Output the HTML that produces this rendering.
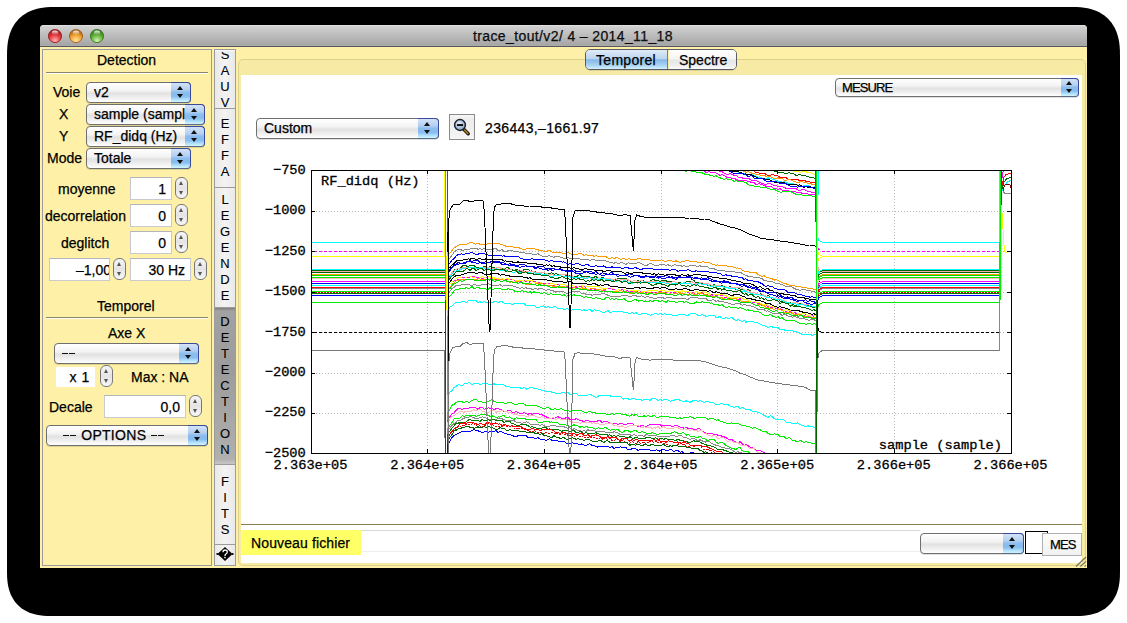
<!DOCTYPE html>
<html><head><meta charset="utf-8">
<style>
*{margin:0;padding:0;box-sizing:border-box}
html,body{width:1127px;height:623px;overflow:hidden;background:#fff;font-family:"Liberation Sans",sans-serif;font-size:13px;color:#000}
.a{position:absolute}
#shadow{left:7px;top:7px;width:1113px;height:609px;background:#000;border-radius:50px}
#win{left:40px;top:25px;width:1047px;height:543px;background:#fef1a7;border-radius:4px 4px 0 0}
#title{left:40px;top:25px;width:1047px;height:22px;border-radius:4px 4px 0 0;background:linear-gradient(#ececec 0px,#d2d2d2 1px,#a6a6a6 20px,#b0b0b0 21px);border-bottom:1px solid #58585e}
.tl{top:4px;width:14px;height:14px;border-radius:50%}
.lbl{white-space:nowrap;line-height:16px;font-size:14px;-webkit-text-stroke:0.25px #000}
.pop .t,.tf .t{-webkit-text-stroke:0.25px #000}.vl{-webkit-text-stroke:0.1px #000}
/* popup */
.pop{border:1px solid #6f6f6f;border-radius:4px;background:linear-gradient(#ffffff 0%,#f3f3f3 40%,#e2e2e2 55%,#f4f4f4 85%,#ffffff 100%);overflow:hidden;box-shadow:0 1px 0 rgba(0,0,0,0.12)}
.pop .t{position:absolute;left:7px;top:1px;white-space:nowrap;font-size:14px;line-height:16px}
.pop{overflow:visible}.pop .b{position:absolute;right:-1px;top:-1px;bottom:-1px;width:20px;background:linear-gradient(#d3e3f6 0%,#b4d0f1 35%,#8dbcee 50%,#86bcef 70%,#b9e6fb 90%,#d2f5fe 100%);border:1px solid #3a4a9a;border-left:none;border-bottom-color:#5a6a8a;border-radius:0 4px 4px 0}
.pop .arr{margin-left:-4px}
.arr{position:absolute;left:50%;width:0;height:0;border-left:3px solid transparent;border-right:3px solid transparent;margin-left:-3px}
.up{border-bottom:4px solid #111}
.dn{border-top:4px solid #111}
.tf{background:#fff;border:1px solid #c8cacf;border-top-color:#b3b5ba}
.tf .t{position:absolute;right:5px;top:3px;white-space:nowrap;font-size:14px;line-height:16px}
.stp{border:1px solid #777;border-radius:6px;background:linear-gradient(#f6f6f6,#e4e4e4 50%,#f8f8f8)}
.stp .arr{border-left-width:2.5px;border-right-width:2.5px;margin-left:-2.5px}
.stp .up{border-bottom:4px solid #555}
.stp .dn{border-top:4px solid #555}
.sep{height:2px;border-top:1px solid #8f8467;border-bottom:1px solid #fff}
.vt{left:214px;width:22px;background:#ededed;border:1px solid #9d9d9d}
.vl{position:absolute;left:0;width:20px;text-align:center;line-height:16px;font-size:13px}
</style></head><body>
<svg class="a" style="left:0;top:0" width="1127" height="623"><path d="M7.00,56.00 L7.08,50.47 L7.34,46.39 L7.75,42.74 L8.34,39.38 L9.09,36.24 L10.01,33.28 L11.09,30.49 L12.33,27.86 L13.73,25.38 L15.28,23.06 L17.00,20.89 L18.86,18.86 L20.89,17.00 L23.06,15.28 L25.38,13.73 L27.86,12.33 L30.49,11.09 L33.28,10.01 L36.24,9.09 L39.38,8.34 L42.74,7.75 L46.39,7.34 L50.47,7.08 L56.00,7.00 L1071.00,7.00 L1076.53,7.08 L1080.61,7.34 L1084.26,7.75 L1087.62,8.34 L1090.76,9.09 L1093.72,10.01 L1096.51,11.09 L1099.14,12.33 L1101.62,13.73 L1103.94,15.28 L1106.11,17.00 L1108.14,18.86 L1110.00,20.89 L1111.72,23.06 L1113.27,25.38 L1114.67,27.86 L1115.91,30.49 L1116.99,33.28 L1117.91,36.24 L1118.66,39.38 L1119.25,42.74 L1119.66,46.39 L1119.92,50.47 L1120.00,56.00 L1120.00,571.00 L1119.92,576.08 L1119.69,579.83 L1119.31,583.17 L1118.77,586.26 L1118.08,589.15 L1117.24,591.87 L1116.25,594.43 L1115.11,596.85 L1113.82,599.12 L1112.39,601.25 L1110.82,603.25 L1109.10,605.10 L1107.25,606.82 L1105.25,608.39 L1103.12,609.82 L1100.85,611.11 L1098.43,612.25 L1095.87,613.24 L1093.15,614.08 L1090.26,614.77 L1087.17,615.31 L1083.83,615.69 L1080.08,615.92 L1075.00,616.00 L52.00,616.00 L46.92,615.92 L43.17,615.69 L39.83,615.31 L36.74,614.77 L33.85,614.08 L31.13,613.24 L28.57,612.25 L26.15,611.11 L23.88,609.82 L21.75,608.39 L19.75,606.82 L17.90,605.10 L16.18,603.25 L14.61,601.25 L13.18,599.12 L11.89,596.85 L10.75,594.43 L9.76,591.87 L8.92,589.15 L8.23,586.26 L7.69,583.17 L7.31,579.83 L7.08,576.08 L7.00,571.00Z" fill="#000"/></svg>
<div id="win" class="a"></div>
<div id="title" class="a"></div>
<svg class="a" style="left:47px;top:28px" width="16" height="16"><defs><radialGradient id="gr" cx="50%" cy="85%" r="75%"><stop offset="0%" stop-color="#ffb4b4"/><stop offset="60%" stop-color="#e4373b"/><stop offset="100%" stop-color="#9a2226"/></radialGradient><linearGradient id="grh" x1="0" y1="0" x2="0" y2="1"><stop offset="0%" stop-color="#fff" stop-opacity="0.95"/><stop offset="100%" stop-color="#fff" stop-opacity="0"/></linearGradient></defs><circle cx="8" cy="8" r="6.6" fill="url(#gr)" stroke="#9a2226" stroke-width="0.9"/><ellipse cx="8" cy="4.6" rx="3.2" ry="2.2" fill="url(#grh)"/></svg>
<svg class="a" style="left:68px;top:28px" width="16" height="16"><defs><radialGradient id="go" cx="50%" cy="85%" r="75%"><stop offset="0%" stop-color="#ffe9a0"/><stop offset="60%" stop-color="#f0a030"/><stop offset="100%" stop-color="#a5621c"/></radialGradient><linearGradient id="goh" x1="0" y1="0" x2="0" y2="1"><stop offset="0%" stop-color="#fff" stop-opacity="0.95"/><stop offset="100%" stop-color="#fff" stop-opacity="0"/></linearGradient></defs><circle cx="8" cy="8" r="6.6" fill="url(#go)" stroke="#a5621c" stroke-width="0.9"/><ellipse cx="8" cy="4.6" rx="3.2" ry="2.2" fill="url(#goh)"/></svg>
<svg class="a" style="left:89px;top:28px" width="16" height="16"><defs><radialGradient id="gg" cx="50%" cy="85%" r="75%"><stop offset="0%" stop-color="#d8f4b0"/><stop offset="60%" stop-color="#5fb03a"/><stop offset="100%" stop-color="#3a7a22"/></radialGradient><linearGradient id="ggh" x1="0" y1="0" x2="0" y2="1"><stop offset="0%" stop-color="#fff" stop-opacity="0.95"/><stop offset="100%" stop-color="#fff" stop-opacity="0"/></linearGradient></defs><circle cx="8" cy="8" r="6.6" fill="url(#gg)" stroke="#3a7a22" stroke-width="0.9"/><ellipse cx="8" cy="4.6" rx="3.2" ry="2.2" fill="url(#ggh)"/></svg>
<div class="a lbl" style="left:473px;top:28px;color:#111;letter-spacing:0.38px">trace_tout/v2/ 4 – 2014_11_18</div>

<div class="a" style="left:238px;top:59px;width:848px;height:507px;border:1px solid #ddd08f;border-radius:5px;background:#f7eaa4"></div>
<div class="a" style="left:241px;top:75px;width:841px;height:488px;background:#fff"></div>
<div class="a" style="left:585px;top:49px;width:152px;height:21px;border:1px solid #5a5a66;border-radius:5px;overflow:hidden;box-shadow:0 1px 0 rgba(0,0,0,.1)">
<div class="a" style="left:0;top:0;width:82px;height:19px;background:linear-gradient(#e0ebf8 0%,#bcd5f0 45%,#86b7e8 52%,#a9d3f3 80%,#d2f1fd 100%);border-right:1px solid #6d7d9a"></div>
<div class="a" style="left:83px;top:0;width:69px;height:19px;background:linear-gradient(#ffffff 0%,#f4f4f4 45%,#e6e6e6 55%,#f0f0f0 85%,#fafafa 100%)"></div>
<div class="a lbl" style="left:10px;top:2px;letter-spacing:0.3px">Temporel</div>
<div class="a lbl" style="left:93px;top:2px">Spectre</div>
</div>
<div class="a pop" style="left:835px;top:78px;width:244px;height:19px"><div class="t" style="top:1px;font-size:13px;left:6px;letter-spacing:-0.9px">MESURE</div><div class="b" style="width:18px"><div class="arr up" style="top:2px"></div><div class="arr dn" style="top:10px"></div></div></div>
<div class="a pop" style="left:256px;top:118px;width:183px;height:21px"><div class="t" style="">Custom</div><div class="b" style="width:21px"><div class="arr up" style="top:3px"></div><div class="arr dn" style="top:11px"></div></div></div>
<div class="a" style="left:449px;top:114px;width:26px;height:26px;border:1px solid #8a8a8a;background:linear-gradient(#f7f7f7,#ececec 20%,#f2f2f2 80%,#f7f7f7)">
<svg class="a" style="left:0;top:0" width="24" height="24" viewBox="0 0 24 24"><defs><radialGradient id="lz" cx="40%" cy="35%" r="70%"><stop offset="0%" stop-color="#e4eef8"/><stop offset="100%" stop-color="#7f9fc4"/></radialGradient></defs><line x1="13" y1="13.5" x2="18.2" y2="18.7" stroke="#111" stroke-width="3.4" stroke-linecap="round"/><line x1="14.6" y1="15.1" x2="17.8" y2="18.3" stroke="#a67c1e" stroke-width="1.7" stroke-linecap="round"/><circle cx="10" cy="10" r="5.4" fill="url(#lz)" stroke="#1b2430" stroke-width="1.5"/><rect x="7" y="9.1" width="6" height="1.9" fill="#0a0a0a"/></svg></div>
<div class="a lbl" style="left:485px;top:120px;letter-spacing:0.35px">236443,–1661.97</div>
<div class="a" style="left:241px;top:524px;width:841px;height:1px;background:#8a7e55"></div>
<div class="a" style="left:241px;top:530px;width:120px;height:25px;background:#ffff66"></div>
<div class="a lbl" style="left:251px;top:535px;letter-spacing:0.12px">Nouveau fichier</div>
<div class="a" style="left:361px;top:530px;width:559px;height:22px;border-top:1px solid #d8d8d8;border-bottom:1px solid #eeeeee"></div>
<div class="a pop" style="left:920px;top:533px;width:104px;height:21px"><div class="t" style=""></div><div class="b" style="width:21px"><div class="arr up" style="top:3px"></div><div class="arr dn" style="top:11px"></div></div></div>
<div class="a" style="left:1025px;top:531px;width:23px;height:23px;border:1px solid #000;background:#fff"></div>
<div class="a" style="left:1042px;top:533px;width:40px;height:23px;border:1px solid #b0b0b0;background:linear-gradient(#fdfdfd,#f1f1f1)"><div class="a lbl" style="left:7px;top:3px;font-size:13px;letter-spacing:-0.9px">MES</div></div>
<!--CHART--><svg class="a" style="left:0;top:0" width="1127" height="623" viewBox="0 0 1127 623">
<defs><clipPath id="pc"><rect x="312" y="171" width="699" height="282"/></clipPath></defs>
<g fill="none" stroke-width="1" shape-rendering="crispEdges"><line x1="316" y1="211.5" x2="1006" y2="211.5" stroke="#bbbbbb" stroke-dasharray="1,2"/><line x1="316" y1="251.5" x2="1006" y2="251.5" stroke="#bbbbbb" stroke-dasharray="1,2"/><line x1="316" y1="292.5" x2="1006" y2="292.5" stroke="#bbbbbb" stroke-dasharray="1,2"/><line x1="316" y1="332.5" x2="1006" y2="332.5" stroke="#bbbbbb" stroke-dasharray="1,2"/><line x1="316" y1="373.5" x2="1006" y2="373.5" stroke="#bbbbbb" stroke-dasharray="1,2"/><line x1="316" y1="413.5" x2="1006" y2="413.5" stroke="#bbbbbb" stroke-dasharray="1,2"/><line x1="427.5" y1="175" x2="427.5" y2="448" stroke="#bbbbbb" stroke-dasharray="1,2"/><line x1="544.5" y1="175" x2="544.5" y2="448" stroke="#bbbbbb" stroke-dasharray="1,2"/><line x1="661.5" y1="175" x2="661.5" y2="448" stroke="#bbbbbb" stroke-dasharray="1,2"/><line x1="777.5" y1="175" x2="777.5" y2="448" stroke="#bbbbbb" stroke-dasharray="1,2"/><line x1="894.5" y1="175" x2="894.5" y2="448" stroke="#bbbbbb" stroke-dasharray="1,2"/></g>
<g clip-path="url(#pc)" fill="none" stroke-width="1" stroke-linejoin="round" shape-rendering="crispEdges">
<polyline points="309.0,256.5 445.5,256.5 445.5,120.0 447.5,120.0 447.5,150.4 448.0,144.4 450.0,145.4 452.0,145.5 454.0,144.8 456.0,144.9 458.0,144.9 460.0,145.2 462.0,145.5 464.0,144.5 466.0,144.1 468.0,145.2 470.0,145.0 472.0,145.4 474.0,144.3 476.0,144.7 478.0,145.2 480.0,144.7 482.0,145.6 484.0,145.8 486.0,144.5 488.0,144.1 490.0,144.7 492.0,145.6 494.0,145.0 496.0,144.6 498.0,144.7 500.0,144.1 502.0,144.3 504.0,144.6 506.0,144.9 508.0,144.5 510.0,144.4 512.0,144.3 514.0,144.7 516.0,144.6 518.0,144.1 520.0,145.2 522.0,145.2 524.0,145.3 526.0,144.6 528.0,145.6 530.0,145.8 532.0,144.7 534.0,144.6 536.0,145.2 538.0,145.4 540.0,145.8 542.0,145.2 544.0,145.6 546.0,145.5 548.0,144.9 550.0,145.1 552.0,145.6 554.0,145.8 556.0,145.3 558.0,145.2 560.0,144.3 562.0,144.4 564.0,145.3 566.0,145.0 568.0,144.5 570.0,144.9 572.0,145.3 574.0,145.4 576.0,144.9 578.0,144.9 580.0,145.0 582.0,145.4 584.0,145.2 586.0,144.9 588.0,144.9 590.0,144.2 592.0,144.0 594.0,145.0 596.0,145.8 598.0,145.4 600.0,145.0 602.0,144.5 604.0,144.8 606.0,145.7 608.0,145.7 610.0,145.3 612.0,145.7 614.0,144.8 616.0,145.0 618.0,145.7 620.0,145.4 622.0,145.1 624.0,144.7 626.0,145.0 628.0,145.7 630.0,144.5 632.0,145.3 634.0,145.6 636.0,145.8 638.0,145.7 640.0,145.7 642.0,145.3 644.0,145.2 646.0,145.0 648.0,144.3 650.0,145.3 652.0,145.2 654.0,144.6 656.0,144.9 658.0,144.9 660.0,144.7 662.0,144.9 664.0,145.3 666.0,145.8 668.0,146.0 670.0,146.0 672.0,145.5 674.0,145.7 676.0,145.8 678.0,146.7 680.0,147.5 682.0,147.9 684.0,148.1 686.0,148.4 688.0,147.7 690.0,148.5 692.0,148.7 694.0,147.9 696.0,147.6 698.0,147.7 700.0,149.0 702.0,149.1 704.0,149.2 706.0,150.4 708.0,150.7 710.0,150.7 712.0,151.2 714.0,152.3 716.0,152.4 718.0,152.9 720.0,154.1 722.0,154.5 724.0,154.7 726.0,155.4 728.0,155.2 730.0,156.0 732.0,156.7 734.0,156.9 736.0,157.2 738.0,158.8 740.0,159.1 742.0,159.1 744.0,160.0 746.0,161.0 748.0,160.4 750.0,160.5 752.0,161.1 754.0,162.5 756.0,162.5 758.0,163.6 760.0,164.3 762.0,164.6 764.0,164.4 766.0,165.8 768.0,166.3 770.0,166.3 772.0,166.1 774.0,166.9 776.0,167.1 778.0,167.7 780.0,167.7 782.0,168.5 784.0,168.1 786.0,168.6 788.0,170.2 790.0,170.8 792.0,170.3 794.0,171.2 796.0,170.8 798.0,171.9 800.0,172.2 802.0,171.9 804.0,171.8 806.0,171.5 808.0,173.1 810.0,172.4 812.0,173.7 814.0,174.5 815.0,173.8 816.5,173.8 816.5,520.0 817.5,261.5 819.0,258.5 821.0,257.2 824.0,256.5 999.5,256.5 999.5,120.0" stroke="#ffff00" stroke-width="1.0"/>
<polyline points="309.0,270.5 445.5,270.5 445.5,120.0 447.5,120.0 447.5,156.2 448.0,150.2 450.0,150.5 452.0,148.8 454.0,148.3 456.0,149.6 458.0,149.9 460.0,149.8 462.0,149.1 464.0,149.4 466.0,149.6 468.0,149.6 470.0,148.7 472.0,149.0 474.0,149.0 476.0,149.6 478.0,150.4 480.0,150.6 482.0,149.8 484.0,149.4 486.0,148.9 488.0,148.2 490.0,148.0 492.0,148.8 494.0,148.8 496.0,148.9 498.0,149.9 500.0,149.6 502.0,149.5 504.0,148.8 506.0,148.2 508.0,148.6 510.0,148.3 512.0,149.0 514.0,150.2 516.0,150.0 518.0,148.9 520.0,149.9 522.0,150.1 524.0,150.1 526.0,150.4 528.0,150.2 530.0,150.2 532.0,149.3 534.0,150.3 536.0,150.6 538.0,149.1 540.0,149.7 542.0,149.9 544.0,149.4 546.0,149.4 548.0,149.3 550.0,150.2 552.0,149.6 554.0,150.1 556.0,149.3 558.0,150.1 560.0,150.4 562.0,149.6 564.0,149.5 566.0,150.2 568.0,150.1 570.0,149.5 572.0,148.8 574.0,148.8 576.0,149.5 578.0,148.7 580.0,149.9 582.0,149.0 584.0,150.0 586.0,149.2 588.0,150.2 590.0,150.0 592.0,149.6 594.0,149.4 596.0,149.6 598.0,149.6 600.0,149.0 602.0,148.6 604.0,149.1 606.0,150.1 608.0,149.8 610.0,148.6 612.0,149.7 614.0,149.9 616.0,150.3 618.0,149.0 620.0,149.7 622.0,148.6 624.0,149.3 626.0,148.9 628.0,148.6 630.0,149.8 632.0,148.7 634.0,149.1 636.0,149.9 638.0,149.0 640.0,148.6 642.0,149.8 644.0,149.3 646.0,149.7 648.0,148.5 650.0,148.8 652.0,148.5 654.0,149.3 656.0,148.5 658.0,149.9 660.0,148.6 662.0,149.7 664.0,148.8 666.0,149.1 668.0,150.4 670.0,149.7 672.0,149.7 674.0,150.8 676.0,150.7 678.0,150.1 680.0,151.9 682.0,151.0 684.0,150.6 686.0,151.2 688.0,152.1 690.0,152.8 692.0,151.9 694.0,152.2 696.0,151.8 698.0,152.6 700.0,153.7 702.0,154.4 704.0,155.3 706.0,155.7 708.0,156.3 710.0,156.6 712.0,156.5 714.0,156.3 716.0,157.5 718.0,157.5 720.0,157.4 722.0,158.4 724.0,159.9 726.0,159.3 728.0,160.3 730.0,160.6 732.0,161.3 734.0,161.1 736.0,163.0 738.0,162.6 740.0,163.4 742.0,163.7 744.0,163.3 746.0,164.6 748.0,164.5 750.0,164.6 752.0,165.0 754.0,165.7 756.0,166.1 758.0,167.6 760.0,168.3 762.0,169.7 764.0,170.3 766.0,170.9 768.0,169.9 770.0,170.2 772.0,170.2 774.0,171.1 776.0,171.7 778.0,172.6 780.0,173.0 782.0,172.4 784.0,172.9 786.0,173.5 788.0,172.9 790.0,173.0 792.0,174.0 794.0,173.9 796.0,175.3 798.0,175.0 800.0,174.9 802.0,175.2 804.0,175.6 806.0,175.9 808.0,176.8 810.0,177.2 812.0,177.2 814.0,178.1 815.0,178.1 816.5,178.1 816.5,520.0 817.5,275.5 819.0,272.5 821.0,271.2 824.0,270.5 999.5,270.5 999.5,120.0" stroke="#006600" stroke-width="1.0"/>
<polyline points="309.0,287.5 445.5,287.5 445.5,120.0 447.5,120.0 447.5,159.5 448.0,153.5 450.0,153.9 452.0,153.7 454.0,154.1 456.0,154.3 458.0,153.2 460.0,152.8 462.0,154.2 464.0,153.6 466.0,153.3 468.0,154.8 470.0,154.2 472.0,154.7 474.0,154.2 476.0,154.4 478.0,153.4 480.0,154.1 482.0,154.8 484.0,154.3 486.0,154.6 488.0,154.5 490.0,153.3 492.0,154.3 494.0,154.3 496.0,153.7 498.0,153.0 500.0,154.4 502.0,154.1 504.0,154.5 506.0,154.9 508.0,154.8 510.0,155.1 512.0,154.2 514.0,154.7 516.0,154.1 518.0,154.9 520.0,155.1 522.0,153.6 524.0,153.1 526.0,153.1 528.0,154.6 530.0,154.1 532.0,154.3 534.0,153.7 536.0,153.9 538.0,153.7 540.0,153.6 542.0,154.0 544.0,154.2 546.0,154.9 548.0,154.7 550.0,155.1 552.0,155.1 554.0,155.4 556.0,154.8 558.0,153.6 560.0,154.6 562.0,155.1 564.0,155.2 566.0,154.6 568.0,154.6 570.0,153.6 572.0,154.5 574.0,154.3 576.0,153.7 578.0,153.0 580.0,154.4 582.0,155.1 584.0,153.6 586.0,154.4 588.0,154.0 590.0,153.3 592.0,153.3 594.0,154.3 596.0,154.9 598.0,153.4 600.0,154.0 602.0,153.1 604.0,154.1 606.0,153.7 608.0,154.7 610.0,155.2 612.0,154.4 614.0,155.1 616.0,154.0 618.0,153.2 620.0,153.9 622.0,153.0 624.0,153.1 626.0,153.5 628.0,154.0 630.0,153.3 632.0,152.8 634.0,154.3 636.0,153.7 638.0,154.8 640.0,155.1 642.0,154.1 644.0,154.0 646.0,154.0 648.0,154.3 650.0,154.3 652.0,154.2 654.0,154.3 656.0,155.0 658.0,154.4 660.0,154.0 662.0,154.6 664.0,154.0 666.0,154.1 668.0,155.6 670.0,155.3 672.0,155.4 674.0,154.5 676.0,155.1 678.0,155.8 680.0,155.0 682.0,156.1 684.0,156.6 686.0,155.8 688.0,156.8 690.0,156.9 692.0,157.5 694.0,157.2 696.0,158.0 698.0,158.4 700.0,157.3 702.0,157.4 704.0,159.0 706.0,160.4 708.0,159.8 710.0,160.3 712.0,161.1 714.0,161.2 716.0,161.6 718.0,162.0 720.0,162.6 722.0,163.5 724.0,163.6 726.0,164.1 728.0,165.4 730.0,164.7 732.0,165.9 734.0,166.9 736.0,166.8 738.0,166.9 740.0,168.4 742.0,168.1 744.0,168.2 746.0,169.1 748.0,170.3 750.0,169.8 752.0,170.4 754.0,171.0 756.0,172.5 758.0,172.5 760.0,173.7 762.0,173.0 764.0,173.3 766.0,174.3 768.0,175.4 770.0,175.2 772.0,174.9 774.0,174.9 776.0,175.9 778.0,175.9 780.0,177.4 782.0,178.2 784.0,177.4 786.0,177.6 788.0,179.0 790.0,179.4 792.0,180.1 794.0,179.6 796.0,179.2 798.0,179.6 800.0,180.9 802.0,180.5 804.0,180.7 806.0,181.1 808.0,181.5 810.0,181.8 812.0,183.1 814.0,182.3 815.0,182.8 816.5,182.8 816.5,520.0 817.5,292.5 819.0,289.5 821.0,288.2 824.0,287.5 999.5,287.5 999.5,120.0" stroke="#ff0000" stroke-width="1.0"/>
<polyline points="309.0,274.5 445.5,274.5 445.5,120.0 447.5,120.0 447.5,161.0 448.0,155.0 450.0,154.5 452.0,154.9 454.0,154.6 456.0,154.3 458.0,154.9 460.0,156.1 462.0,156.3 464.0,156.3 466.0,155.2 468.0,155.5 470.0,155.0 472.0,154.7 474.0,154.4 476.0,154.6 478.0,156.0 480.0,156.3 482.0,156.4 484.0,156.4 486.0,155.2 488.0,155.0 490.0,155.6 492.0,156.0 494.0,156.4 496.0,156.6 498.0,155.0 500.0,155.6 502.0,155.9 504.0,155.6 506.0,154.9 508.0,155.2 510.0,154.6 512.0,156.0 514.0,156.4 516.0,155.9 518.0,155.2 520.0,156.2 522.0,155.9 524.0,156.4 526.0,156.5 528.0,155.9 530.0,155.5 532.0,155.7 534.0,155.4 536.0,154.8 538.0,154.9 540.0,155.9 542.0,154.7 544.0,154.3 546.0,155.3 548.0,155.0 550.0,155.4 552.0,155.4 554.0,155.2 556.0,156.4 558.0,155.2 560.0,155.2 562.0,154.8 564.0,155.5 566.0,155.1 568.0,155.1 570.0,155.8 572.0,155.3 574.0,155.5 576.0,156.3 578.0,155.0 580.0,154.4 582.0,154.6 584.0,155.7 586.0,155.8 588.0,155.1 590.0,155.0 592.0,154.7 594.0,155.1 596.0,154.5 598.0,155.5 600.0,156.3 602.0,156.7 604.0,156.4 606.0,156.7 608.0,155.0 610.0,154.9 612.0,156.2 614.0,156.3 616.0,155.6 618.0,156.4 620.0,156.1 622.0,156.3 624.0,155.4 626.0,154.8 628.0,155.2 630.0,154.7 632.0,155.0 634.0,156.2 636.0,155.4 638.0,154.5 640.0,154.2 642.0,154.4 644.0,155.7 646.0,155.3 648.0,155.0 650.0,154.5 652.0,156.1 654.0,155.6 656.0,154.9 658.0,154.4 660.0,154.2 662.0,154.6 664.0,155.9 666.0,155.4 668.0,155.1 670.0,156.1 672.0,156.0 674.0,157.7 676.0,156.6 678.0,157.2 680.0,158.0 682.0,157.7 684.0,158.9 686.0,158.4 688.0,157.9 690.0,158.2 692.0,157.7 694.0,158.4 696.0,158.4 698.0,159.8 700.0,160.4 702.0,160.3 704.0,159.7 706.0,160.2 708.0,160.7 710.0,161.1 712.0,161.7 714.0,163.4 716.0,162.9 718.0,162.9 720.0,165.0 722.0,165.3 724.0,166.6 726.0,166.2 728.0,167.4 730.0,167.6 732.0,168.3 734.0,168.8 736.0,168.8 738.0,168.3 740.0,168.7 742.0,170.5 744.0,171.5 746.0,172.2 748.0,171.6 750.0,172.3 752.0,173.2 754.0,173.5 756.0,174.3 758.0,174.3 760.0,174.9 762.0,175.4 764.0,175.0 766.0,176.4 768.0,177.3 770.0,176.1 772.0,177.7 774.0,178.5 776.0,178.5 778.0,177.5 780.0,179.1 782.0,178.4 784.0,180.0 786.0,180.3 788.0,179.4 790.0,179.6 792.0,180.8 794.0,181.2 796.0,182.0 798.0,182.8 800.0,181.8 802.0,181.3 804.0,183.1 806.0,182.2 808.0,183.7 810.0,183.0 812.0,184.3 814.0,184.9 815.0,184.3 816.5,184.3 816.5,520.0 817.5,279.5 819.0,276.5 821.0,275.2 824.0,274.5 999.5,274.5 999.5,120.0" stroke="#ff9900" stroke-width="1.0"/>
<polyline points="309.0,285.5 445.5,285.5 445.5,120.0 447.5,120.0 447.5,164.2 448.0,158.2 450.0,158.6 452.0,158.8 454.0,159.2 456.0,158.9 458.0,159.2 460.0,157.5 462.0,157.7 464.0,158.8 466.0,158.6 468.0,159.0 470.0,157.6 472.0,157.8 474.0,157.4 476.0,157.9 478.0,158.1 480.0,157.1 482.0,157.1 484.0,157.2 486.0,158.6 488.0,158.7 490.0,157.6 492.0,158.4 494.0,157.4 496.0,158.0 498.0,157.3 500.0,156.7 502.0,158.3 504.0,157.5 506.0,157.3 508.0,158.7 510.0,159.0 512.0,157.9 514.0,158.9 516.0,158.4 518.0,158.5 520.0,157.6 522.0,158.7 524.0,158.6 526.0,159.2 528.0,159.2 530.0,158.0 532.0,157.7 534.0,157.2 536.0,157.0 538.0,156.8 540.0,157.2 542.0,157.9 544.0,157.0 546.0,158.0 548.0,157.7 550.0,157.5 552.0,158.5 554.0,158.1 556.0,157.7 558.0,157.8 560.0,158.4 562.0,157.2 564.0,158.7 566.0,157.3 568.0,158.2 570.0,158.8 572.0,157.3 574.0,158.3 576.0,157.8 578.0,158.1 580.0,157.1 582.0,156.8 584.0,156.9 586.0,158.5 588.0,157.6 590.0,158.4 592.0,159.0 594.0,159.2 596.0,158.1 598.0,157.8 600.0,158.0 602.0,158.5 604.0,157.4 606.0,158.3 608.0,158.7 610.0,159.0 612.0,157.4 614.0,158.7 616.0,157.4 618.0,157.5 620.0,158.0 622.0,158.8 624.0,158.0 626.0,158.8 628.0,158.4 630.0,157.8 632.0,157.5 634.0,157.2 636.0,156.9 638.0,156.9 640.0,158.0 642.0,159.0 644.0,157.7 646.0,157.0 648.0,158.6 650.0,158.3 652.0,157.9 654.0,157.4 656.0,158.0 658.0,158.7 660.0,158.1 662.0,158.1 664.0,157.5 666.0,159.1 668.0,158.0 670.0,158.7 672.0,159.8 674.0,158.9 676.0,159.9 678.0,160.8 680.0,160.6 682.0,161.0 684.0,159.9 686.0,160.3 688.0,160.0 690.0,161.4 692.0,160.9 694.0,161.2 696.0,162.5 698.0,162.8 700.0,163.3 702.0,162.9 704.0,163.1 706.0,164.0 708.0,164.1 710.0,164.1 712.0,164.7 714.0,164.7 716.0,165.5 718.0,167.3 720.0,168.2 722.0,168.2 724.0,168.2 726.0,168.3 728.0,168.1 730.0,168.7 732.0,170.3 734.0,171.3 736.0,171.0 738.0,172.1 740.0,172.8 742.0,173.2 744.0,173.6 746.0,174.2 748.0,174.0 750.0,174.9 752.0,174.7 754.0,175.4 756.0,176.5 758.0,177.1 760.0,176.8 762.0,178.2 764.0,178.4 766.0,178.6 768.0,177.8 770.0,178.8 772.0,178.8 774.0,179.9 776.0,180.2 778.0,181.2 780.0,181.5 782.0,182.2 784.0,181.8 786.0,182.5 788.0,183.2 790.0,183.9 792.0,183.3 794.0,184.3 796.0,184.9 798.0,185.0 800.0,185.7 802.0,186.2 804.0,185.7 806.0,185.7 808.0,185.2 810.0,186.5 812.0,187.4 814.0,187.0 815.0,186.8 816.5,186.8 816.5,520.0 817.5,290.5 819.0,287.5 821.0,286.2 824.0,285.5 999.5,285.5 999.5,120.0" stroke="#00ffff" stroke-width="1.0"/>
<polyline points="309.0,293.5 445.5,293.5 445.5,120.0 447.5,120.0 447.5,165.6 448.0,159.6 450.0,159.8 452.0,159.3 454.0,158.6 456.0,157.9 458.0,158.9 460.0,158.9 462.0,159.5 464.0,158.9 466.0,159.5 468.0,158.7 470.0,159.5 472.0,159.6 474.0,159.1 476.0,159.1 478.0,159.4 480.0,158.5 482.0,158.9 484.0,159.6 486.0,158.7 488.0,159.5 490.0,159.6 492.0,159.9 494.0,159.0 496.0,158.2 498.0,159.3 500.0,159.7 502.0,159.1 504.0,158.2 506.0,158.1 508.0,159.0 510.0,158.6 512.0,159.8 514.0,159.4 516.0,158.6 518.0,159.2 520.0,158.8 522.0,159.8 524.0,160.1 526.0,159.4 528.0,159.4 530.0,159.5 532.0,159.8 534.0,160.2 536.0,158.5 538.0,158.5 540.0,159.0 542.0,158.6 544.0,159.0 546.0,158.2 548.0,159.5 550.0,159.2 552.0,158.3 554.0,159.1 556.0,158.7 558.0,158.3 560.0,158.7 562.0,158.2 564.0,158.1 566.0,159.4 568.0,159.5 570.0,158.2 572.0,159.3 574.0,158.1 576.0,158.4 578.0,159.6 580.0,159.4 582.0,158.8 584.0,158.7 586.0,158.7 588.0,158.1 590.0,159.7 592.0,158.4 594.0,158.6 596.0,159.4 598.0,158.9 600.0,159.9 602.0,158.8 604.0,159.9 606.0,160.1 608.0,159.7 610.0,160.0 612.0,159.3 614.0,159.8 616.0,159.9 618.0,159.3 620.0,159.1 622.0,159.4 624.0,159.0 626.0,158.2 628.0,159.2 630.0,158.6 632.0,158.8 634.0,159.5 636.0,158.5 638.0,157.9 640.0,157.9 642.0,158.8 644.0,158.6 646.0,158.4 648.0,158.7 650.0,159.7 652.0,158.8 654.0,158.7 656.0,159.7 658.0,159.5 660.0,158.7 662.0,159.0 664.0,159.3 666.0,158.9 668.0,159.3 670.0,159.4 672.0,160.6 674.0,160.2 676.0,160.8 678.0,161.8 680.0,162.2 682.0,161.4 684.0,161.7 686.0,161.3 688.0,161.5 690.0,161.9 692.0,162.7 694.0,163.5 696.0,162.6 698.0,161.8 700.0,162.5 702.0,162.5 704.0,162.7 706.0,164.6 708.0,164.3 710.0,165.7 712.0,165.8 714.0,167.3 716.0,168.0 718.0,167.0 720.0,167.2 722.0,169.1 724.0,169.4 726.0,169.5 728.0,170.6 730.0,171.3 732.0,171.3 734.0,171.5 736.0,171.2 738.0,171.9 740.0,172.1 742.0,173.4 744.0,174.2 746.0,173.9 748.0,175.0 750.0,174.7 752.0,174.9 754.0,176.4 756.0,176.9 758.0,178.3 760.0,178.5 762.0,179.0 764.0,178.3 766.0,179.7 768.0,178.9 770.0,180.0 772.0,181.2 774.0,181.9 776.0,182.4 778.0,181.9 780.0,182.5 782.0,183.2 784.0,182.3 786.0,183.9 788.0,184.7 790.0,184.3 792.0,185.0 794.0,184.7 796.0,184.5 798.0,185.5 800.0,184.8 802.0,186.2 804.0,187.2 806.0,186.4 808.0,187.6 810.0,186.5 812.0,187.9 814.0,187.4 815.0,187.8 816.5,187.8 816.5,520.0 817.5,298.5 819.0,295.5 821.0,294.2 824.0,293.5 999.5,293.5 999.5,120.0" stroke="#000000" stroke-width="1.0"/>
<polyline points="309.0,283.5 445.5,283.5 445.5,120.0 447.5,120.0 447.5,165.6 448.0,159.6 450.0,159.2 452.0,160.0 454.0,159.1 456.0,159.8 458.0,159.7 460.0,159.0 462.0,159.7 464.0,159.0 466.0,159.5 468.0,159.0 470.0,158.8 472.0,159.4 474.0,160.5 476.0,159.4 478.0,159.2 480.0,160.0 482.0,160.9 484.0,160.5 486.0,160.0 488.0,160.9 490.0,159.4 492.0,160.5 494.0,159.8 496.0,159.2 498.0,159.0 500.0,159.3 502.0,160.4 504.0,159.5 506.0,160.0 508.0,160.3 510.0,159.8 512.0,160.0 514.0,159.1 516.0,158.8 518.0,159.0 520.0,160.0 522.0,159.9 524.0,159.6 526.0,160.0 528.0,159.9 530.0,159.6 532.0,160.4 534.0,160.6 536.0,159.7 538.0,160.0 540.0,160.1 542.0,160.8 544.0,160.7 546.0,159.8 548.0,160.9 550.0,159.6 552.0,159.7 554.0,160.4 556.0,159.4 558.0,159.8 560.0,159.0 562.0,160.0 564.0,160.5 566.0,160.3 568.0,160.9 570.0,159.9 572.0,160.4 574.0,160.3 576.0,160.3 578.0,160.0 580.0,160.7 582.0,161.1 584.0,160.3 586.0,160.4 588.0,159.3 590.0,160.2 592.0,160.3 594.0,161.1 596.0,161.0 598.0,159.9 600.0,159.7 602.0,160.2 604.0,159.1 606.0,159.6 608.0,159.2 610.0,159.0 612.0,158.8 614.0,160.1 616.0,159.3 618.0,159.2 620.0,159.5 622.0,160.6 624.0,159.4 626.0,159.7 628.0,160.0 630.0,160.8 632.0,160.9 634.0,161.0 636.0,159.9 638.0,159.8 640.0,159.6 642.0,160.6 644.0,161.1 646.0,159.7 648.0,159.2 650.0,159.2 652.0,159.2 654.0,159.7 656.0,160.1 658.0,159.5 660.0,158.9 662.0,159.6 664.0,159.9 666.0,160.6 668.0,161.7 670.0,161.7 672.0,161.5 674.0,161.7 676.0,162.1 678.0,161.1 680.0,162.5 682.0,163.0 684.0,163.4 686.0,163.5 688.0,162.9 690.0,162.8 692.0,162.4 694.0,163.4 696.0,162.7 698.0,162.6 700.0,163.0 702.0,163.5 704.0,164.3 706.0,164.4 708.0,164.6 710.0,165.3 712.0,165.8 714.0,166.8 716.0,166.8 718.0,168.8 720.0,169.3 722.0,168.9 724.0,169.3 726.0,170.0 728.0,170.5 730.0,170.6 732.0,172.4 734.0,173.6 736.0,173.3 738.0,173.6 740.0,173.2 742.0,173.4 744.0,174.3 746.0,174.8 748.0,176.4 750.0,176.0 752.0,175.9 754.0,178.0 756.0,178.2 758.0,177.9 760.0,178.9 762.0,178.4 764.0,179.5 766.0,181.1 768.0,181.6 770.0,181.8 772.0,181.2 774.0,181.5 776.0,181.4 778.0,182.9 780.0,183.2 782.0,184.0 784.0,183.7 786.0,183.6 788.0,185.0 790.0,186.1 792.0,186.4 794.0,186.6 796.0,186.9 798.0,187.1 800.0,186.3 802.0,186.8 804.0,186.8 806.0,186.4 808.0,186.5 810.0,187.2 812.0,187.6 814.0,188.8 815.0,188.8 816.5,188.8 816.5,520.0 817.5,288.5 819.0,285.5 821.0,284.2 824.0,283.5 999.5,283.5 999.5,120.0" stroke="#0000ff" stroke-width="1.0"/>
<polyline points="309.0,281.5 445.5,281.5 445.5,120.0 447.5,120.0 447.5,168.5 448.0,162.5 450.0,163.7 452.0,162.5 454.0,163.2 456.0,162.3 458.0,162.2 460.0,163.7 462.0,162.7 464.0,163.2 466.0,163.0 468.0,162.9 470.0,163.0 472.0,162.4 474.0,163.4 476.0,162.3 478.0,162.2 480.0,161.8 482.0,162.1 484.0,162.5 486.0,163.6 488.0,163.0 490.0,162.2 492.0,162.2 494.0,163.7 496.0,162.4 498.0,163.0 500.0,162.8 502.0,163.2 504.0,162.8 506.0,163.3 508.0,163.1 510.0,163.3 512.0,163.9 514.0,163.5 516.0,162.5 518.0,161.9 520.0,163.5 522.0,163.2 524.0,162.4 526.0,163.7 528.0,163.4 530.0,163.6 532.0,164.0 534.0,162.9 536.0,162.7 538.0,163.6 540.0,162.5 542.0,163.4 544.0,162.3 546.0,163.1 548.0,163.5 550.0,164.1 552.0,164.1 554.0,163.4 556.0,162.5 558.0,162.1 560.0,162.8 562.0,162.9 564.0,162.1 566.0,163.5 568.0,163.2 570.0,163.5 572.0,162.6 574.0,162.3 576.0,161.8 578.0,162.3 580.0,162.3 582.0,162.6 584.0,162.6 586.0,163.5 588.0,164.0 590.0,162.7 592.0,162.7 594.0,162.2 596.0,163.1 598.0,164.0 600.0,162.7 602.0,163.4 604.0,162.8 606.0,161.9 608.0,163.2 610.0,162.7 612.0,162.2 614.0,162.6 616.0,162.3 618.0,162.6 620.0,162.7 622.0,162.7 624.0,163.1 626.0,162.6 628.0,162.1 630.0,161.8 632.0,161.8 634.0,162.6 636.0,162.6 638.0,163.5 640.0,163.2 642.0,163.5 644.0,164.1 646.0,162.5 648.0,161.9 650.0,161.9 652.0,162.4 654.0,162.9 656.0,163.5 658.0,162.9 660.0,163.9 662.0,162.5 664.0,163.8 666.0,163.2 668.0,164.4 670.0,163.3 672.0,164.9 674.0,165.2 676.0,165.8 678.0,165.4 680.0,164.6 682.0,166.0 684.0,165.6 686.0,164.8 688.0,165.7 690.0,166.0 692.0,166.1 694.0,165.7 696.0,165.6 698.0,166.6 700.0,166.8 702.0,166.7 704.0,167.6 706.0,168.8 708.0,169.5 710.0,169.6 712.0,169.8 714.0,170.2 716.0,170.3 718.0,170.7 720.0,171.6 722.0,171.6 724.0,173.1 726.0,174.0 728.0,174.4 730.0,173.7 732.0,174.4 734.0,175.2 736.0,175.1 738.0,177.1 740.0,177.7 742.0,177.8 744.0,178.5 746.0,178.1 748.0,178.3 750.0,179.3 752.0,180.4 754.0,180.9 756.0,180.2 758.0,181.4 760.0,182.8 762.0,183.2 764.0,183.9 766.0,184.6 768.0,183.5 770.0,183.6 772.0,184.3 774.0,185.7 776.0,185.3 778.0,186.5 780.0,187.0 782.0,186.8 784.0,187.2 786.0,188.2 788.0,188.5 790.0,187.9 792.0,189.0 794.0,188.2 796.0,188.5 798.0,190.0 800.0,190.5 802.0,189.8 804.0,189.7 806.0,190.5 808.0,191.5 810.0,191.7 812.0,192.5 814.0,192.5 815.0,191.8 816.5,191.8 816.5,520.0 817.5,286.5 819.0,283.5 821.0,282.2 824.0,281.5 999.5,281.5 999.5,120.0" stroke="#ff00ff" stroke-width="1.0"/>
<polyline points="309.0,281.5 445.5,281.5 445.5,120.0 447.5,120.0 447.5,171.9 448.0,165.9 450.0,165.7 452.0,165.2 454.0,166.4 456.0,165.2 458.0,165.7 460.0,166.7 462.0,165.4 464.0,165.9 466.0,166.2 468.0,165.2 470.0,165.5 472.0,166.2 474.0,166.0 476.0,166.4 478.0,165.5 480.0,165.3 482.0,165.0 484.0,165.7 486.0,166.7 488.0,166.4 490.0,166.7 492.0,166.0 494.0,166.5 496.0,165.4 498.0,165.4 500.0,166.1 502.0,166.5 504.0,166.0 506.0,165.2 508.0,165.2 510.0,165.2 512.0,165.3 514.0,166.4 516.0,165.5 518.0,166.6 520.0,167.0 522.0,165.4 524.0,165.6 526.0,165.8 528.0,165.0 530.0,165.5 532.0,166.6 534.0,165.4 536.0,166.0 538.0,165.2 540.0,165.9 542.0,166.8 544.0,165.7 546.0,164.9 548.0,164.8 550.0,165.7 552.0,164.9 554.0,164.8 556.0,165.6 558.0,166.7 560.0,166.1 562.0,165.8 564.0,166.2 566.0,165.3 568.0,165.9 570.0,165.3 572.0,166.0 574.0,166.9 576.0,165.4 578.0,165.9 580.0,166.2 582.0,165.4 584.0,165.3 586.0,166.7 588.0,167.3 590.0,165.7 592.0,166.3 594.0,167.0 596.0,165.8 598.0,166.2 600.0,165.1 602.0,165.4 604.0,166.1 606.0,166.2 608.0,166.6 610.0,165.4 612.0,165.5 614.0,166.5 616.0,166.4 618.0,166.0 620.0,165.8 622.0,166.9 624.0,166.5 626.0,165.2 628.0,166.3 630.0,165.8 632.0,165.8 634.0,165.4 636.0,165.7 638.0,165.5 640.0,165.0 642.0,165.9 644.0,165.2 646.0,166.3 648.0,165.1 650.0,166.3 652.0,166.7 654.0,166.2 656.0,166.5 658.0,165.7 660.0,166.4 662.0,166.2 664.0,165.9 666.0,167.3 668.0,166.9 670.0,166.8 672.0,167.8 674.0,167.4 676.0,167.9 678.0,167.3 680.0,168.5 682.0,167.9 684.0,167.4 686.0,169.2 688.0,168.4 690.0,169.7 692.0,170.4 694.0,170.0 696.0,168.8 698.0,168.7 700.0,169.0 702.0,169.9 704.0,171.0 706.0,172.4 708.0,172.0 710.0,171.8 712.0,172.9 714.0,172.7 716.0,172.9 718.0,174.2 720.0,175.3 722.0,174.7 724.0,175.6 726.0,176.8 728.0,177.6 730.0,177.5 732.0,178.8 734.0,178.1 736.0,179.3 738.0,180.1 740.0,181.0 742.0,180.8 744.0,180.3 746.0,180.4 748.0,181.7 750.0,181.7 752.0,183.0 754.0,182.7 756.0,184.3 758.0,184.0 760.0,183.9 762.0,184.4 764.0,185.3 766.0,186.2 768.0,186.4 770.0,186.3 772.0,187.1 774.0,188.6 776.0,188.5 778.0,189.6 780.0,188.4 782.0,190.2 784.0,190.9 786.0,190.7 788.0,190.8 790.0,191.1 792.0,192.2 794.0,191.1 796.0,192.0 798.0,192.3 800.0,192.2 802.0,193.2 804.0,193.7 806.0,192.9 808.0,194.0 810.0,194.1 812.0,194.4 814.0,195.0 815.0,194.8 816.5,194.8 816.5,520.0 817.5,286.5 819.0,283.5 821.0,282.2 824.0,281.5 999.5,281.5 999.5,120.0" stroke="#ff00ff" stroke-width="1.0"/>
<polyline points="309.0,302.5 445.5,302.5 445.5,120.0 447.5,120.0 447.5,174.1 448.0,168.1 450.0,167.9 452.0,168.1 454.0,167.5 456.0,168.4 458.0,168.8 460.0,168.6 462.0,167.5 464.0,167.9 466.0,167.6 468.0,167.4 470.0,168.7 472.0,169.2 474.0,167.5 476.0,168.6 478.0,168.4 480.0,167.9 482.0,167.5 484.0,168.2 486.0,168.0 488.0,168.4 490.0,168.5 492.0,167.4 494.0,168.3 496.0,169.1 498.0,169.3 500.0,168.7 502.0,167.3 504.0,166.8 506.0,166.8 508.0,168.5 510.0,167.8 512.0,167.7 514.0,168.7 516.0,167.9 518.0,168.1 520.0,167.9 522.0,167.1 524.0,167.9 526.0,168.6 528.0,167.5 530.0,167.3 532.0,167.6 534.0,166.9 536.0,167.6 538.0,168.5 540.0,168.5 542.0,168.2 544.0,168.8 546.0,167.6 548.0,168.0 550.0,167.7 552.0,168.1 554.0,167.3 556.0,168.3 558.0,167.3 560.0,167.1 562.0,168.3 564.0,169.0 566.0,168.2 568.0,167.9 570.0,167.5 572.0,167.4 574.0,168.0 576.0,167.4 578.0,167.0 580.0,167.6 582.0,167.2 584.0,168.0 586.0,168.6 588.0,168.8 590.0,168.2 592.0,167.8 594.0,167.8 596.0,166.9 598.0,168.1 600.0,167.7 602.0,167.5 604.0,167.0 606.0,167.5 608.0,168.0 610.0,167.8 612.0,168.7 614.0,168.6 616.0,167.7 618.0,167.9 620.0,168.8 622.0,168.3 624.0,168.3 626.0,167.2 628.0,167.7 630.0,167.8 632.0,167.7 634.0,167.7 636.0,168.1 638.0,168.1 640.0,168.0 642.0,167.3 644.0,167.7 646.0,168.8 648.0,168.1 650.0,167.1 652.0,166.7 654.0,167.6 656.0,167.0 658.0,166.8 660.0,166.8 662.0,167.7 664.0,169.2 666.0,168.9 668.0,168.8 670.0,168.9 672.0,169.2 674.0,169.3 676.0,170.0 678.0,170.7 680.0,170.7 682.0,170.3 684.0,170.7 686.0,171.5 688.0,170.4 690.0,170.3 692.0,171.2 694.0,171.8 696.0,172.0 698.0,172.1 700.0,172.8 702.0,172.7 704.0,173.7 706.0,174.7 708.0,174.3 710.0,175.3 712.0,175.7 714.0,176.5 716.0,175.5 718.0,177.1 720.0,177.8 722.0,178.7 724.0,179.4 726.0,178.6 728.0,179.4 730.0,178.9 732.0,180.0 734.0,181.3 736.0,180.7 738.0,181.1 740.0,181.0 742.0,181.5 744.0,182.1 746.0,182.4 748.0,184.6 750.0,185.5 752.0,185.3 754.0,186.1 756.0,186.6 758.0,186.8 760.0,186.9 762.0,187.7 764.0,188.0 766.0,187.8 768.0,188.2 770.0,189.1 772.0,189.7 774.0,189.3 776.0,190.3 778.0,191.4 780.0,192.0 782.0,192.1 784.0,191.2 786.0,191.8 788.0,191.6 790.0,191.8 792.0,192.4 794.0,193.2 796.0,194.3 798.0,194.6 800.0,194.2 802.0,195.1 804.0,195.3 806.0,195.5 808.0,195.3 810.0,195.8 812.0,196.0 814.0,197.0 815.0,196.8 816.5,196.8 816.5,520.0 817.5,307.5 819.0,304.5 821.0,303.2 824.0,302.5 999.5,302.5 999.5,120.0" stroke="#00ee00" stroke-width="1.0"/>
<polyline points="309.0,274.5 445.5,274.5 445.5,120.0 447.5,120.0 447.5,261.6 448.0,255.6 450.0,253.0 452.0,250.7 454.0,248.0 456.0,246.7 458.0,245.6 460.0,244.6 462.0,244.6 464.0,244.6 466.0,244.7 468.0,243.2 470.0,242.9 472.0,242.6 474.0,243.8 476.0,244.1 478.0,243.0 480.0,244.4 482.0,244.9 484.0,244.6 486.0,244.5 488.0,243.7 490.0,243.2 492.0,244.0 494.0,243.5 496.0,243.7 498.0,244.0 500.0,243.9 502.0,244.8 504.0,245.3 506.0,246.3 508.0,246.3 510.0,246.7 512.0,246.7 514.0,247.2 516.0,247.1 518.0,247.0 520.0,248.4 522.0,249.0 524.0,249.1 526.0,249.1 528.0,248.6 530.0,248.4 532.0,248.6 534.0,248.4 536.0,249.8 538.0,249.8 540.0,250.8 542.0,250.4 544.0,251.5 546.0,251.9 548.0,250.6 550.0,250.7 552.0,252.2 554.0,252.1 556.0,253.1 558.0,252.6 560.0,252.0 562.0,253.0 564.0,253.8 566.0,253.3 568.0,252.8 570.0,253.3 572.0,254.7 574.0,254.9 576.0,254.0 578.0,254.0 580.0,253.9 582.0,253.9 584.0,255.3 586.0,254.8 588.0,255.4 590.0,255.6 592.0,255.3 594.0,256.3 596.0,255.7 598.0,256.5 600.0,256.0 602.0,256.4 604.0,256.4 606.0,256.5 608.0,258.0 610.0,258.3 612.0,257.7 614.0,258.6 616.0,257.8 618.0,258.0 620.0,259.0 622.0,259.1 624.0,258.3 626.0,259.7 628.0,258.9 630.0,258.9 632.0,259.8 634.0,259.3 636.0,259.2 638.0,258.8 640.0,258.7 642.0,259.6 644.0,259.4 646.0,260.0 648.0,259.8 650.0,259.9 652.0,261.0 654.0,260.5 656.0,260.5 658.0,261.1 660.0,260.2 662.0,259.8 664.0,261.1 666.0,261.4 668.0,260.6 670.0,260.2 672.0,261.1 674.0,261.8 676.0,260.8 678.0,261.8 680.0,262.1 682.0,261.8 684.0,261.4 686.0,260.7 688.0,260.4 690.0,262.0 692.0,261.3 694.0,261.9 696.0,261.4 698.0,262.3 700.0,262.2 702.0,262.0 704.0,261.9 706.0,263.1 708.0,262.6 710.0,262.9 712.0,263.8 714.0,264.9 716.0,265.1 718.0,264.8 720.0,266.1 722.0,265.4 724.0,265.1 726.0,265.7 728.0,266.4 730.0,266.2 732.0,266.6 734.0,267.3 736.0,268.1 738.0,267.9 740.0,268.4 742.0,270.0 744.0,271.2 746.0,271.4 748.0,271.9 750.0,272.3 752.0,272.0 754.0,272.1 756.0,272.5 758.0,274.6 760.0,275.4 762.0,276.5 764.0,275.7 766.0,276.9 768.0,277.4 770.0,278.5 772.0,278.5 774.0,280.2 776.0,279.5 778.0,280.5 780.0,281.6 782.0,282.7 784.0,283.2 786.0,283.8 788.0,284.5 790.0,285.4 792.0,284.9 794.0,285.5 796.0,286.4 798.0,286.9 800.0,286.5 802.0,287.3 804.0,288.0 806.0,287.9 808.0,288.2 810.0,288.2 812.0,288.8 814.0,289.3 815.0,289.2 816.5,289.2 816.5,120.0 817.5,269.5 819.0,272.5 821.0,273.8 824.0,274.5 999.5,274.5 999.5,120.0" stroke="#ff9900" stroke-width="1.0"/>
<polyline points="309.0,288.5 445.5,288.5 445.5,120.0 447.5,120.0 447.5,266.2 448.0,260.2 450.0,257.9 452.0,255.2 454.0,252.2 456.0,250.4 458.0,249.8 460.0,249.4 462.0,250.2 464.0,250.0 466.0,249.6 468.0,249.1 470.0,249.0 472.0,248.1 474.0,248.4 476.0,248.0 478.0,249.4 480.0,248.2 482.0,249.4 484.0,248.4 486.0,249.3 488.0,249.0 490.0,249.0 492.0,250.0 494.0,248.7 496.0,248.5 498.0,250.3 500.0,250.3 502.0,249.6 504.0,251.3 506.0,252.0 508.0,250.7 510.0,251.0 512.0,250.7 514.0,251.2 516.0,252.1 518.0,251.6 520.0,252.7 522.0,252.0 524.0,252.1 526.0,253.6 528.0,253.4 530.0,253.6 532.0,254.1 534.0,254.3 536.0,254.3 538.0,253.7 540.0,255.1 542.0,256.2 544.0,256.8 546.0,256.5 548.0,256.0 550.0,255.9 552.0,256.7 554.0,257.2 556.0,256.3 558.0,256.4 560.0,256.9 562.0,257.5 564.0,258.5 566.0,258.3 568.0,257.4 570.0,258.8 572.0,258.6 574.0,258.9 576.0,258.5 578.0,258.9 580.0,259.0 582.0,260.0 584.0,259.1 586.0,259.8 588.0,259.4 590.0,260.4 592.0,259.5 594.0,259.8 596.0,260.2 598.0,261.0 600.0,260.2 602.0,260.9 604.0,260.8 606.0,261.0 608.0,261.5 610.0,262.8 612.0,262.4 614.0,263.3 616.0,262.2 618.0,263.4 620.0,262.9 622.0,262.4 624.0,263.5 626.0,264.3 628.0,262.9 630.0,263.1 632.0,264.1 634.0,263.7 636.0,263.4 638.0,262.8 640.0,262.8 642.0,263.9 644.0,265.1 646.0,265.6 648.0,264.8 650.0,263.6 652.0,263.9 654.0,264.9 656.0,265.4 658.0,265.3 660.0,264.4 662.0,264.8 664.0,264.8 666.0,265.2 668.0,264.6 670.0,265.9 672.0,266.2 674.0,264.9 676.0,264.8 678.0,265.9 680.0,265.2 682.0,266.3 684.0,265.9 686.0,266.2 688.0,266.3 690.0,265.4 692.0,265.3 694.0,265.2 696.0,266.1 698.0,266.5 700.0,265.5 702.0,267.0 704.0,266.8 706.0,266.6 708.0,267.1 710.0,268.6 712.0,268.5 714.0,268.8 716.0,269.8 718.0,270.4 720.0,270.4 722.0,270.0 724.0,270.4 726.0,271.3 728.0,271.7 730.0,271.6 732.0,271.3 734.0,271.5 736.0,272.5 738.0,272.7 740.0,271.9 742.0,273.5 744.0,274.8 746.0,275.4 748.0,276.2 750.0,276.8 752.0,276.7 754.0,277.5 756.0,277.4 758.0,277.1 760.0,277.9 762.0,278.5 764.0,280.3 766.0,280.9 768.0,281.2 770.0,281.8 772.0,281.5 774.0,282.5 776.0,283.6 778.0,283.8 780.0,284.0 782.0,284.7 784.0,285.2 786.0,286.5 788.0,286.3 790.0,286.5 792.0,287.1 794.0,288.4 796.0,289.2 798.0,289.5 800.0,290.4 802.0,289.8 804.0,289.2 806.0,290.1 808.0,290.6 810.0,290.4 812.0,291.6 814.0,291.6 815.0,292.1 816.5,292.1 816.5,120.0 817.5,283.5 819.0,286.5 821.0,287.8 824.0,288.5 999.5,288.5 999.5,120.0" stroke="#888888" stroke-width="1.0"/>
<polyline points="309.0,283.5 445.5,283.5 445.5,120.0 447.5,120.0 447.5,270.7 448.0,264.7 450.0,262.8 452.0,260.2 454.0,258.7 456.0,256.2 458.0,254.7 460.0,254.1 462.0,253.9 464.0,254.7 466.0,253.4 468.0,253.7 470.0,252.9 472.0,252.9 474.0,253.3 476.0,254.4 478.0,254.3 480.0,253.0 482.0,253.2 484.0,253.0 486.0,254.6 488.0,255.1 490.0,255.3 492.0,255.4 494.0,255.4 496.0,255.9 498.0,256.0 500.0,255.0 502.0,256.1 504.0,255.8 506.0,256.5 508.0,256.5 510.0,256.3 512.0,256.3 514.0,256.6 516.0,256.6 518.0,256.3 520.0,257.9 522.0,258.6 524.0,259.4 526.0,259.2 528.0,259.0 530.0,259.5 532.0,258.5 534.0,259.5 536.0,259.5 538.0,259.0 540.0,259.1 542.0,260.0 544.0,259.8 546.0,260.4 548.0,261.1 550.0,261.0 552.0,260.6 554.0,261.4 556.0,261.3 558.0,261.4 560.0,261.5 562.0,262.1 564.0,261.8 566.0,263.1 568.0,264.3 570.0,263.6 572.0,264.2 574.0,265.0 576.0,263.4 578.0,263.2 580.0,264.7 582.0,265.4 584.0,265.3 586.0,264.4 588.0,264.7 590.0,265.9 592.0,266.5 594.0,266.6 596.0,265.5 598.0,266.6 600.0,266.1 602.0,266.8 604.0,265.8 606.0,267.5 608.0,267.3 610.0,267.7 612.0,266.8 614.0,267.5 616.0,267.7 618.0,268.0 620.0,267.7 622.0,268.5 624.0,268.0 626.0,267.9 628.0,267.7 630.0,268.8 632.0,268.0 634.0,268.0 636.0,267.7 638.0,268.9 640.0,269.2 642.0,269.3 644.0,268.3 646.0,268.8 648.0,268.8 650.0,268.4 652.0,268.0 654.0,270.1 656.0,269.0 658.0,269.0 660.0,269.0 662.0,269.8 664.0,269.0 666.0,269.6 668.0,269.6 670.0,270.7 672.0,269.3 674.0,269.6 676.0,270.1 678.0,271.3 680.0,270.8 682.0,270.6 684.0,271.0 686.0,270.3 688.0,269.6 690.0,270.4 692.0,271.6 694.0,271.7 696.0,270.7 698.0,271.4 700.0,272.0 702.0,271.2 704.0,271.9 706.0,271.8 708.0,271.8 710.0,272.1 712.0,272.2 714.0,272.8 716.0,272.5 718.0,273.5 720.0,273.3 722.0,275.0 724.0,275.4 726.0,274.5 728.0,276.0 730.0,275.5 732.0,276.2 734.0,276.8 736.0,276.8 738.0,276.9 740.0,277.4 742.0,277.4 744.0,279.4 746.0,278.8 748.0,280.5 750.0,280.2 752.0,280.6 754.0,281.3 756.0,281.1 758.0,281.7 760.0,282.7 762.0,283.7 764.0,285.4 766.0,286.6 768.0,285.3 770.0,286.4 772.0,286.2 774.0,288.1 776.0,288.0 778.0,289.7 780.0,289.9 782.0,289.4 784.0,289.4 786.0,290.3 788.0,292.4 790.0,291.9 792.0,292.6 794.0,292.9 796.0,293.1 798.0,294.5 800.0,293.9 802.0,295.0 804.0,295.5 806.0,296.5 808.0,296.2 810.0,297.2 812.0,296.8 814.0,297.1 815.0,297.1 816.5,297.1 816.5,120.0 817.5,278.5 819.0,281.5 821.0,282.8 824.0,283.5 999.5,283.5 999.5,120.0" stroke="#0000ff" stroke-width="1.0"/>
<polyline points="309.0,293.5 445.5,293.5 445.5,120.0 447.5,120.0 447.5,275.1 448.0,269.1 450.0,267.4 452.0,264.9 454.0,263.6 456.0,261.5 458.0,260.0 460.0,260.5 462.0,260.3 464.0,259.4 466.0,259.6 468.0,258.9 470.0,259.2 472.0,258.2 474.0,258.2 476.0,259.4 478.0,258.9 480.0,258.6 482.0,259.5 484.0,259.6 486.0,258.8 488.0,259.3 490.0,259.7 492.0,259.0 494.0,259.7 496.0,259.1 498.0,259.4 500.0,259.2 502.0,259.6 504.0,261.2 506.0,260.9 508.0,262.0 510.0,261.5 512.0,261.8 514.0,262.6 516.0,262.6 518.0,261.8 520.0,262.5 522.0,263.0 524.0,262.5 526.0,262.3 528.0,263.8 530.0,263.8 532.0,263.4 534.0,263.9 536.0,263.7 538.0,264.9 540.0,264.9 542.0,264.4 544.0,265.6 546.0,264.9 548.0,265.1 550.0,264.9 552.0,266.3 554.0,265.8 556.0,266.5 558.0,266.1 560.0,266.8 562.0,267.6 564.0,267.7 566.0,267.8 568.0,267.9 570.0,268.0 572.0,268.4 574.0,267.8 576.0,268.3 578.0,268.2 580.0,269.4 582.0,270.1 584.0,268.8 586.0,268.6 588.0,269.7 590.0,269.9 592.0,269.1 594.0,270.2 596.0,271.1 598.0,270.6 600.0,270.4 602.0,270.8 604.0,271.7 606.0,271.0 608.0,270.9 610.0,270.7 612.0,271.6 614.0,271.7 616.0,271.5 618.0,271.7 620.0,271.3 622.0,271.8 624.0,273.2 626.0,273.1 628.0,272.7 630.0,273.8 632.0,273.2 634.0,272.8 636.0,272.3 638.0,272.4 640.0,272.5 642.0,272.7 644.0,273.9 646.0,273.3 648.0,273.1 650.0,273.7 652.0,274.6 654.0,273.8 656.0,274.4 658.0,273.9 660.0,274.1 662.0,274.3 664.0,275.1 666.0,275.0 668.0,274.6 670.0,275.1 672.0,274.5 674.0,274.3 676.0,275.3 678.0,275.0 680.0,275.3 682.0,274.7 684.0,275.5 686.0,275.3 688.0,274.7 690.0,275.7 692.0,275.3 694.0,274.9 696.0,274.7 698.0,274.4 700.0,274.5 702.0,275.7 704.0,275.4 706.0,275.6 708.0,276.3 710.0,276.9 712.0,277.0 714.0,278.0 716.0,277.6 718.0,277.8 720.0,278.2 722.0,278.1 724.0,278.4 726.0,278.5 728.0,279.8 730.0,279.5 732.0,280.5 734.0,280.2 736.0,281.1 738.0,281.7 740.0,281.5 742.0,282.9 744.0,283.3 746.0,283.6 748.0,283.1 750.0,283.9 752.0,284.3 754.0,285.2 756.0,286.7 758.0,287.4 760.0,286.6 762.0,287.8 764.0,289.0 766.0,289.1 768.0,288.7 770.0,290.4 772.0,290.5 774.0,291.9 776.0,292.6 778.0,293.1 780.0,293.9 782.0,292.9 784.0,294.3 786.0,294.2 788.0,294.3 790.0,295.1 792.0,295.9 794.0,295.4 796.0,296.2 798.0,297.4 800.0,297.5 802.0,297.8 804.0,297.7 806.0,299.1 808.0,298.5 810.0,299.3 812.0,299.8 814.0,299.0 815.0,299.9 816.5,299.9 816.5,120.0 817.5,288.5 819.0,291.5 821.0,292.8 824.0,293.5 999.5,293.5 999.5,120.0" stroke="#000000" stroke-width="1.0"/>
<polyline points="309.0,295.5 445.5,295.5 445.5,120.0 447.5,120.0 447.5,279.3 448.0,273.3 450.0,268.9 452.0,267.2 454.0,264.3 456.0,264.9 458.0,262.1 460.0,263.2 462.0,263.0 464.0,263.1 466.0,263.3 468.0,261.3 470.0,260.7 472.0,261.5 474.0,260.8 476.0,260.6 478.0,260.5 480.0,262.0 482.0,262.6 484.0,262.7 486.0,261.4 488.0,262.7 490.0,262.2 492.0,261.4 494.0,261.7 496.0,261.8 498.0,261.2 500.0,262.3 502.0,262.4 504.0,263.1 506.0,264.3 508.0,264.2 510.0,263.8 512.0,264.8 514.0,265.7 516.0,264.9 518.0,265.9 520.0,264.2 522.0,264.0 524.0,264.2 526.0,266.2 528.0,266.5 530.0,266.8 532.0,266.0 534.0,266.4 536.0,267.6 538.0,266.3 540.0,266.1 542.0,266.0 544.0,267.1 546.0,268.5 548.0,268.5 550.0,268.2 552.0,268.6 554.0,268.0 556.0,269.9 558.0,269.2 560.0,268.9 562.0,269.1 564.0,270.5 566.0,269.9 568.0,271.2 570.0,270.4 572.0,270.5 574.0,269.8 576.0,271.6 578.0,272.1 580.0,271.6 582.0,270.7 584.0,271.4 586.0,271.4 588.0,272.7 590.0,273.4 592.0,273.4 594.0,272.4 596.0,271.5 598.0,273.4 600.0,274.3 602.0,272.8 604.0,273.2 606.0,273.4 608.0,274.8 610.0,273.1 612.0,272.7 614.0,274.5 616.0,274.6 618.0,274.5 620.0,275.3 622.0,275.3 624.0,275.6 626.0,274.8 628.0,274.2 630.0,273.9 632.0,274.6 634.0,275.7 636.0,275.4 638.0,275.3 640.0,275.9 642.0,276.4 644.0,276.4 646.0,275.7 648.0,276.7 650.0,277.1 652.0,277.5 654.0,277.7 656.0,275.7 658.0,276.6 660.0,276.2 662.0,276.2 664.0,276.5 666.0,275.8 668.0,275.8 670.0,277.6 672.0,276.7 674.0,277.9 676.0,277.8 678.0,276.9 680.0,276.6 682.0,277.2 684.0,277.7 686.0,277.1 688.0,276.2 690.0,276.2 692.0,277.9 694.0,278.3 696.0,276.9 698.0,278.2 700.0,278.1 702.0,277.8 704.0,279.2 706.0,278.1 708.0,277.8 710.0,278.5 712.0,279.9 714.0,280.2 716.0,280.3 718.0,281.6 720.0,281.0 722.0,281.9 724.0,280.6 726.0,282.2 728.0,281.5 730.0,282.6 732.0,283.6 734.0,283.8 736.0,283.8 738.0,284.0 740.0,284.7 742.0,284.5 744.0,284.5 746.0,285.6 748.0,286.2 750.0,285.8 752.0,287.0 754.0,287.7 756.0,287.5 758.0,289.1 760.0,290.2 762.0,289.9 764.0,291.4 766.0,292.6 768.0,292.6 770.0,292.4 772.0,292.4 774.0,292.4 776.0,293.1 778.0,295.5 780.0,294.4 782.0,296.5 784.0,297.0 786.0,297.8 788.0,296.8 790.0,298.1 792.0,297.7 794.0,298.9 796.0,299.8 798.0,300.2 800.0,300.1 802.0,301.1 804.0,300.1 806.0,299.8 808.0,301.7 810.0,300.6 812.0,301.3 814.0,301.8 815.0,302.3 816.5,302.3 816.5,120.0 817.5,290.5 819.0,293.5 821.0,294.8 824.0,295.5 999.5,295.5 999.5,120.0" stroke="#0000cc" stroke-width="1.0"/>
<polyline points="309.0,295.5 445.5,295.5 445.5,120.0 447.5,120.0 447.5,279.1 448.0,273.1 450.0,270.7 452.0,267.9 454.0,266.0 456.0,264.9 458.0,264.4 460.0,263.3 462.0,263.7 464.0,262.1 466.0,262.0 468.0,261.9 470.0,261.2 472.0,262.6 474.0,262.1 476.0,263.1 478.0,263.9 480.0,262.5 482.0,263.6 484.0,263.9 486.0,263.6 488.0,262.1 490.0,262.6 492.0,263.3 494.0,262.7 496.0,262.5 498.0,262.8 500.0,262.9 502.0,264.4 504.0,264.0 506.0,264.2 508.0,265.0 510.0,266.1 512.0,265.1 514.0,264.3 516.0,266.4 518.0,266.9 520.0,267.2 522.0,266.8 524.0,266.1 526.0,265.8 528.0,266.2 530.0,266.9 532.0,266.3 534.0,267.8 536.0,268.5 538.0,267.2 540.0,268.9 542.0,268.8 544.0,269.9 546.0,269.4 548.0,270.2 550.0,269.7 552.0,270.1 554.0,270.1 556.0,269.2 558.0,269.2 560.0,269.6 562.0,270.4 564.0,270.7 566.0,271.3 568.0,271.9 570.0,271.6 572.0,271.4 574.0,271.9 576.0,273.3 578.0,273.4 580.0,273.3 582.0,273.7 584.0,272.6 586.0,272.0 588.0,271.9 590.0,272.0 592.0,271.9 594.0,273.4 596.0,274.8 598.0,273.4 600.0,274.4 602.0,275.5 604.0,275.6 606.0,274.2 608.0,275.0 610.0,274.5 612.0,274.2 614.0,273.9 616.0,275.1 618.0,276.5 620.0,275.2 622.0,275.0 624.0,275.6 626.0,275.0 628.0,276.0 630.0,277.1 632.0,276.8 634.0,275.7 636.0,275.4 638.0,275.7 640.0,277.0 642.0,278.1 644.0,277.5 646.0,276.4 648.0,276.3 650.0,276.8 652.0,276.3 654.0,276.2 656.0,276.9 658.0,278.2 660.0,277.2 662.0,278.5 664.0,279.0 666.0,278.1 668.0,277.3 670.0,277.0 672.0,278.1 674.0,278.9 676.0,279.3 678.0,277.9 680.0,278.0 682.0,277.1 684.0,277.5 686.0,277.7 688.0,277.4 690.0,277.2 692.0,279.4 694.0,278.5 696.0,278.7 698.0,278.9 700.0,278.9 702.0,279.5 704.0,279.7 706.0,279.9 708.0,279.2 710.0,280.5 712.0,281.2 714.0,281.8 716.0,281.3 718.0,281.6 720.0,282.8 722.0,283.2 724.0,281.9 726.0,282.4 728.0,282.3 730.0,283.8 732.0,283.8 734.0,284.0 736.0,283.8 738.0,284.6 740.0,285.6 742.0,286.2 744.0,285.8 746.0,286.4 748.0,287.6 750.0,286.9 752.0,289.1 754.0,288.1 756.0,289.5 758.0,289.3 760.0,291.4 762.0,292.0 764.0,291.4 766.0,292.2 768.0,293.7 770.0,294.6 772.0,294.9 774.0,295.2 776.0,296.0 778.0,297.1 780.0,296.8 782.0,297.4 784.0,298.4 786.0,298.4 788.0,298.1 790.0,299.2 792.0,299.2 794.0,300.3 796.0,301.0 798.0,301.8 800.0,300.4 802.0,300.0 804.0,302.2 806.0,302.7 808.0,303.8 810.0,303.9 812.0,304.5 814.0,303.1 815.0,303.5 816.5,303.5 816.5,120.0 817.5,290.5 819.0,293.5 821.0,294.8 824.0,295.5 999.5,295.5 999.5,120.0" stroke="#0000ee" stroke-width="1.0"/>
<polyline points="309.0,270.5 445.5,270.5 445.5,520.0 447.5,520.0 447.5,283.3 448.0,277.3 450.0,275.7 452.0,273.8 454.0,270.0 456.0,269.8 458.0,268.8 460.0,268.4 462.0,266.3 464.0,265.2 466.0,265.7 468.0,266.8 470.0,265.5 472.0,266.0 474.0,265.6 476.0,267.2 478.0,268.1 480.0,266.8 482.0,268.2 484.0,265.8 486.0,267.4 488.0,268.2 490.0,266.2 492.0,267.3 494.0,267.3 496.0,268.7 498.0,267.0 500.0,267.6 502.0,269.0 504.0,268.9 506.0,268.0 508.0,267.1 510.0,269.6 512.0,269.2 514.0,270.9 516.0,268.9 518.0,270.5 520.0,271.2 522.0,271.9 524.0,269.4 526.0,269.9 528.0,269.1 530.0,271.3 532.0,270.9 534.0,272.8 536.0,271.8 538.0,272.9 540.0,273.7 542.0,272.1 544.0,272.7 546.0,274.4 548.0,273.7 550.0,273.1 552.0,272.8 554.0,274.5 556.0,273.3 558.0,274.4 560.0,274.7 562.0,275.0 564.0,273.9 566.0,275.3 568.0,276.7 570.0,275.4 572.0,275.1 574.0,277.0 576.0,276.7 578.0,275.7 580.0,274.6 582.0,276.7 584.0,276.3 586.0,276.6 588.0,276.2 590.0,277.3 592.0,278.1 594.0,277.2 596.0,276.2 598.0,278.9 600.0,279.7 602.0,277.2 604.0,278.2 606.0,279.1 608.0,278.6 610.0,279.5 612.0,280.7 614.0,280.1 616.0,279.3 618.0,278.5 620.0,278.5 622.0,278.3 624.0,278.2 626.0,278.6 628.0,280.9 630.0,280.8 632.0,281.6 634.0,282.4 636.0,282.3 638.0,279.9 640.0,281.9 642.0,280.0 644.0,281.5 646.0,282.3 648.0,282.0 650.0,281.2 652.0,279.9 654.0,279.5 656.0,281.1 658.0,280.5 660.0,281.3 662.0,280.7 664.0,280.2 666.0,280.5 668.0,282.0 670.0,281.9 672.0,281.5 674.0,281.8 676.0,282.1 678.0,282.1 680.0,282.0 682.0,283.6 684.0,283.5 686.0,281.9 688.0,281.6 690.0,281.2 692.0,281.6 694.0,280.7 696.0,282.8 698.0,283.0 700.0,282.6 702.0,284.3 704.0,283.3 706.0,283.9 708.0,285.5 710.0,285.0 712.0,285.2 714.0,284.7 716.0,286.8 718.0,286.9 720.0,285.7 722.0,285.7 724.0,286.6 726.0,286.9 728.0,287.3 730.0,286.5 732.0,287.7 734.0,288.7 736.0,289.5 738.0,288.9 740.0,288.9 742.0,289.6 744.0,290.2 746.0,290.6 748.0,289.6 750.0,290.4 752.0,293.4 754.0,294.3 756.0,293.8 758.0,294.9 760.0,293.9 762.0,294.1 764.0,295.3 766.0,296.7 768.0,295.4 770.0,296.7 772.0,299.0 774.0,299.2 776.0,300.8 778.0,298.9 780.0,301.2 782.0,302.2 784.0,300.3 786.0,301.6 788.0,303.2 790.0,302.4 792.0,303.6 794.0,304.9 796.0,305.4 798.0,304.6 800.0,303.4 802.0,304.7 804.0,304.3 806.0,305.5 808.0,305.3 810.0,305.7 812.0,306.7 814.0,308.1 815.0,307.3 816.5,307.3 816.5,520.0 817.5,275.5 819.0,272.5 821.0,271.2 824.0,270.5 999.5,270.5 999.5,120.0" stroke="#006600" stroke-width="1.0"/>
<polyline points="309.0,271.5 445.5,271.5 445.5,120.0 447.5,120.0 447.5,283.0 448.0,277.0 450.0,275.3 452.0,272.4 454.0,270.2 456.0,269.6 458.0,268.7 460.0,268.5 462.0,268.2 464.0,267.5 466.0,267.0 468.0,267.6 470.0,266.9 472.0,267.5 474.0,267.9 476.0,268.3 478.0,268.6 480.0,267.4 482.0,267.0 484.0,267.9 486.0,267.9 488.0,267.3 490.0,268.0 492.0,268.7 494.0,268.9 496.0,267.9 498.0,267.8 500.0,267.4 502.0,269.3 504.0,268.6 506.0,269.5 508.0,269.6 510.0,269.9 512.0,270.0 514.0,270.8 516.0,270.7 518.0,270.3 520.0,269.9 522.0,270.6 524.0,271.9 526.0,270.9 528.0,271.8 530.0,272.2 532.0,271.5 534.0,271.5 536.0,272.6 538.0,272.6 540.0,272.7 542.0,273.0 544.0,272.5 546.0,273.7 548.0,274.0 550.0,274.2 552.0,274.0 554.0,275.0 556.0,275.5 558.0,275.3 560.0,274.4 562.0,274.4 564.0,274.5 566.0,274.5 568.0,275.8 570.0,276.1 572.0,275.6 574.0,277.0 576.0,277.0 578.0,277.4 580.0,277.7 582.0,277.7 584.0,277.4 586.0,278.4 588.0,277.1 590.0,277.9 592.0,278.6 594.0,278.2 596.0,278.8 598.0,277.9 600.0,278.1 602.0,278.0 604.0,278.3 606.0,279.1 608.0,278.4 610.0,278.6 612.0,279.8 614.0,279.3 616.0,278.8 618.0,280.5 620.0,280.3 622.0,279.3 624.0,280.1 626.0,279.7 628.0,279.7 630.0,280.9 632.0,281.2 634.0,280.8 636.0,281.0 638.0,281.1 640.0,281.0 642.0,280.3 644.0,281.4 646.0,281.9 648.0,281.4 650.0,281.2 652.0,281.6 654.0,281.5 656.0,281.4 658.0,282.3 660.0,282.7 662.0,281.4 664.0,281.0 666.0,282.1 668.0,282.9 670.0,282.8 672.0,281.9 674.0,281.2 676.0,282.5 678.0,283.2 680.0,283.1 682.0,283.1 684.0,283.6 686.0,282.9 688.0,283.5 690.0,282.5 692.0,281.7 694.0,283.1 696.0,283.3 698.0,283.6 700.0,282.4 702.0,282.6 704.0,283.4 706.0,282.9 708.0,283.4 710.0,284.3 712.0,285.5 714.0,285.7 716.0,285.3 718.0,285.4 720.0,285.8 722.0,286.6 724.0,287.6 726.0,286.2 728.0,287.7 730.0,288.2 732.0,287.0 734.0,287.2 736.0,287.5 738.0,287.7 740.0,287.9 742.0,288.3 744.0,289.8 746.0,290.2 748.0,290.0 750.0,291.8 752.0,292.7 754.0,292.2 756.0,293.5 758.0,294.2 760.0,294.3 762.0,293.8 764.0,295.2 766.0,296.3 768.0,297.1 770.0,297.9 772.0,296.9 774.0,298.6 776.0,297.7 778.0,298.3 780.0,299.2 782.0,300.1 784.0,300.5 786.0,301.8 788.0,302.3 790.0,303.0 792.0,303.0 794.0,302.8 796.0,302.1 798.0,303.3 800.0,304.5 802.0,303.6 804.0,305.2 806.0,304.0 808.0,304.5 810.0,305.6 812.0,306.1 814.0,306.3 815.0,306.1 816.5,306.1 816.5,120.0 817.5,266.5 819.0,269.5 821.0,270.8 824.0,271.5 999.5,271.5 999.5,120.0" stroke="#ffaaaa" stroke-width="1.0"/>
<polyline points="309.0,285.5 445.5,285.5 445.5,120.0 447.5,120.0 447.5,285.2 448.0,279.2 450.0,277.1 452.0,274.2 454.0,272.2 456.0,270.9 458.0,271.0 460.0,269.7 462.0,268.7 464.0,268.5 466.0,268.2 468.0,268.0 470.0,267.7 472.0,267.4 474.0,267.8 476.0,267.9 478.0,268.5 480.0,268.1 482.0,267.7 484.0,267.9 486.0,268.6 488.0,268.6 490.0,269.4 492.0,269.8 494.0,269.3 496.0,268.5 498.0,269.7 500.0,270.3 502.0,270.0 504.0,270.5 506.0,270.1 508.0,271.3 510.0,271.8 512.0,272.0 514.0,272.5 516.0,271.4 518.0,271.8 520.0,272.4 522.0,272.9 524.0,272.4 526.0,271.9 528.0,272.8 530.0,272.2 532.0,273.4 534.0,272.5 536.0,273.3 538.0,273.7 540.0,273.3 542.0,274.0 544.0,274.4 546.0,274.5 548.0,275.7 550.0,276.2 552.0,276.6 554.0,275.5 556.0,274.9 558.0,275.5 560.0,275.3 562.0,276.6 564.0,276.3 566.0,276.0 568.0,276.3 570.0,276.8 572.0,277.7 574.0,277.6 576.0,277.3 578.0,278.1 580.0,277.2 582.0,277.3 584.0,278.4 586.0,279.0 588.0,278.0 590.0,277.7 592.0,278.6 594.0,279.3 596.0,278.4 598.0,279.0 600.0,279.0 602.0,278.7 604.0,278.9 606.0,279.3 608.0,279.9 610.0,279.5 612.0,280.5 614.0,281.4 616.0,281.5 618.0,280.4 620.0,281.2 622.0,281.6 624.0,280.6 626.0,281.1 628.0,281.9 630.0,282.9 632.0,283.2 634.0,282.6 636.0,282.5 638.0,283.2 640.0,282.0 642.0,282.3 644.0,281.5 646.0,282.7 648.0,282.9 650.0,282.1 652.0,281.9 654.0,282.5 656.0,283.2 658.0,282.2 660.0,282.3 662.0,282.8 664.0,282.4 666.0,283.6 668.0,283.8 670.0,284.3 672.0,283.9 674.0,283.9 676.0,283.1 678.0,283.3 680.0,283.3 682.0,283.4 684.0,282.7 686.0,284.0 688.0,283.2 690.0,283.5 692.0,284.6 694.0,284.2 696.0,284.8 698.0,283.8 700.0,283.9 702.0,284.1 704.0,284.2 706.0,284.5 708.0,285.0 710.0,286.2 712.0,287.0 714.0,285.7 716.0,286.6 718.0,286.9 720.0,286.9 722.0,286.4 724.0,287.0 726.0,287.4 728.0,287.8 730.0,288.6 732.0,288.6 734.0,288.6 736.0,288.8 738.0,290.5 740.0,290.1 742.0,291.5 744.0,290.7 746.0,291.8 748.0,292.2 750.0,293.1 752.0,293.3 754.0,294.4 756.0,294.6 758.0,293.9 760.0,295.2 762.0,295.9 764.0,295.8 766.0,297.1 768.0,298.1 770.0,297.6 772.0,297.6 774.0,298.2 776.0,299.4 778.0,299.8 780.0,299.6 782.0,300.6 784.0,301.5 786.0,302.3 788.0,302.4 790.0,303.7 792.0,304.1 794.0,303.6 796.0,303.8 798.0,305.2 800.0,304.5 802.0,304.9 804.0,305.0 806.0,305.8 808.0,306.7 810.0,305.9 812.0,306.0 814.0,306.0 815.0,307.3 816.5,307.3 816.5,120.0 817.5,280.5 819.0,283.5 821.0,284.8 824.0,285.5 999.5,285.5 999.5,120.0" stroke="#00ffff" stroke-width="1.0"/>
<polyline points="309.0,272.5 445.5,272.5 445.5,520.0 447.5,520.0 447.5,287.4 448.0,281.4 450.0,278.6 452.0,276.1 454.0,274.7 456.0,271.8 458.0,271.3 460.0,271.9 462.0,271.9 464.0,270.8 466.0,269.0 468.0,268.9 470.0,270.4 472.0,268.4 474.0,268.4 476.0,270.4 478.0,269.6 480.0,268.7 482.0,268.7 484.0,270.5 486.0,269.5 488.0,269.5 490.0,270.1 492.0,270.9 494.0,270.3 496.0,269.0 498.0,270.2 500.0,269.1 502.0,269.1 504.0,269.5 506.0,271.3 508.0,270.9 510.0,272.1 512.0,271.1 514.0,270.7 516.0,270.5 518.0,272.6 520.0,273.9 522.0,272.7 524.0,272.4 526.0,271.8 528.0,273.6 530.0,273.4 532.0,273.0 534.0,274.5 536.0,275.0 538.0,274.9 540.0,274.1 542.0,275.5 544.0,275.9 546.0,275.8 548.0,275.1 550.0,277.3 552.0,278.0 554.0,277.9 556.0,278.9 558.0,278.2 560.0,277.4 562.0,276.5 564.0,277.9 566.0,278.2 568.0,278.2 570.0,279.9 572.0,280.2 574.0,278.2 576.0,279.9 578.0,278.0 580.0,279.4 582.0,279.0 584.0,280.2 586.0,281.4 588.0,280.6 590.0,281.2 592.0,279.4 594.0,280.7 596.0,279.6 598.0,280.3 600.0,280.3 602.0,279.7 604.0,281.6 606.0,280.4 608.0,280.5 610.0,280.2 612.0,281.9 614.0,281.5 616.0,280.8 618.0,280.5 620.0,281.1 622.0,282.3 624.0,281.4 626.0,281.2 628.0,283.1 630.0,283.5 632.0,282.5 634.0,282.7 636.0,282.2 638.0,282.6 640.0,283.1 642.0,282.8 644.0,282.7 646.0,282.7 648.0,283.0 650.0,283.9 652.0,285.3 654.0,285.1 656.0,284.5 658.0,283.0 660.0,283.0 662.0,284.4 664.0,284.3 666.0,285.6 668.0,286.3 670.0,284.7 672.0,284.4 674.0,284.2 676.0,285.2 678.0,283.9 680.0,284.0 682.0,285.9 684.0,285.1 686.0,286.7 688.0,285.5 690.0,286.5 692.0,285.8 694.0,284.4 696.0,285.5 698.0,284.8 700.0,286.7 702.0,287.0 704.0,286.8 706.0,288.1 708.0,287.6 710.0,288.9 712.0,288.9 714.0,287.4 716.0,287.5 718.0,289.3 720.0,288.0 722.0,290.3 724.0,288.5 726.0,290.2 728.0,290.7 730.0,290.4 732.0,291.1 734.0,291.4 736.0,291.1 738.0,291.0 740.0,290.4 742.0,292.5 744.0,294.2 746.0,293.7 748.0,295.3 750.0,294.8 752.0,294.6 754.0,296.5 756.0,297.9 758.0,296.2 760.0,298.3 762.0,297.8 764.0,299.3 766.0,298.8 768.0,301.1 770.0,300.3 772.0,300.0 774.0,299.8 776.0,300.3 778.0,300.8 780.0,303.5 782.0,302.4 784.0,302.7 786.0,303.5 788.0,303.9 790.0,306.3 792.0,305.0 794.0,306.8 796.0,306.6 798.0,306.2 800.0,306.5 802.0,307.7 804.0,307.5 806.0,308.1 808.0,308.6 810.0,309.4 812.0,310.4 814.0,309.7 815.0,310.3 816.5,310.3 816.5,520.0 817.5,277.5 819.0,274.5 821.0,273.2 824.0,272.5 999.5,272.5 999.5,120.0" stroke="#006600" stroke-width="1.0"/>
<polyline points="309.0,293.5 445.5,293.5 445.5,520.0 447.5,520.0 447.5,289.6 448.0,283.6 450.0,281.8 452.0,279.2 454.0,277.1 456.0,275.5 458.0,275.3 460.0,275.3 462.0,274.6 464.0,274.1 466.0,273.3 468.0,272.4 470.0,272.5 472.0,273.1 474.0,272.4 476.0,273.6 478.0,273.0 480.0,272.8 482.0,272.5 484.0,274.1 486.0,274.3 488.0,274.6 490.0,274.3 492.0,273.2 494.0,273.4 496.0,273.9 498.0,273.6 500.0,275.1 502.0,274.8 504.0,274.4 506.0,275.6 508.0,275.0 510.0,276.3 512.0,276.1 514.0,276.3 516.0,276.2 518.0,276.6 520.0,276.3 522.0,276.1 524.0,277.6 526.0,277.2 528.0,278.2 530.0,277.7 532.0,279.0 534.0,279.5 536.0,279.5 538.0,279.7 540.0,279.6 542.0,280.0 544.0,279.2 546.0,279.7 548.0,280.6 550.0,280.0 552.0,281.2 554.0,281.7 556.0,281.2 558.0,281.1 560.0,281.4 562.0,281.5 564.0,282.8 566.0,282.3 568.0,281.5 570.0,281.5 572.0,282.7 574.0,283.7 576.0,283.3 578.0,283.3 580.0,283.5 582.0,284.0 584.0,283.3 586.0,283.9 588.0,284.1 590.0,284.4 592.0,283.9 594.0,283.7 596.0,284.1 598.0,285.4 600.0,284.9 602.0,285.3 604.0,285.0 606.0,284.7 608.0,284.6 610.0,286.0 612.0,286.6 614.0,286.1 616.0,286.7 618.0,286.9 620.0,287.5 622.0,288.0 624.0,287.2 626.0,288.1 628.0,288.5 630.0,288.1 632.0,288.5 634.0,287.9 636.0,287.6 638.0,287.3 640.0,288.3 642.0,287.5 644.0,287.0 646.0,288.2 648.0,288.7 650.0,288.3 652.0,288.9 654.0,287.7 656.0,287.7 658.0,287.8 660.0,288.1 662.0,287.8 664.0,287.6 666.0,288.0 668.0,289.2 670.0,289.8 672.0,289.7 674.0,289.2 676.0,288.6 678.0,289.7 680.0,289.4 682.0,289.7 684.0,288.6 686.0,288.5 688.0,289.7 690.0,290.1 692.0,290.4 694.0,290.1 696.0,289.7 698.0,289.8 700.0,290.4 702.0,290.0 704.0,290.4 706.0,290.3 708.0,291.4 710.0,290.6 712.0,291.7 714.0,292.8 716.0,291.7 718.0,292.6 720.0,293.1 722.0,293.9 724.0,293.9 726.0,293.5 728.0,293.9 730.0,295.2 732.0,295.8 734.0,294.8 736.0,294.6 738.0,294.7 740.0,294.8 742.0,296.1 744.0,296.3 746.0,298.0 748.0,298.6 750.0,298.2 752.0,299.2 754.0,299.5 756.0,300.2 758.0,300.4 760.0,300.7 762.0,301.2 764.0,302.1 766.0,303.4 768.0,303.9 770.0,303.5 772.0,305.0 774.0,306.2 776.0,306.8 778.0,307.4 780.0,306.5 782.0,307.4 784.0,307.4 786.0,309.0 788.0,308.9 790.0,310.2 792.0,310.0 794.0,310.9 796.0,310.8 798.0,310.5 800.0,311.2 802.0,311.6 804.0,313.0 806.0,312.6 808.0,313.1 810.0,313.5 812.0,314.6 814.0,313.7 815.0,314.3 816.5,314.3 816.5,520.0 817.5,298.5 819.0,295.5 821.0,294.2 824.0,293.5 999.5,293.5 999.5,120.0" stroke="#000000" stroke-width="1.0"/>
<polyline points="309.0,256.5 445.5,256.5 445.5,120.0 447.5,120.0 447.5,294.0 448.0,288.0 450.0,284.3 452.0,281.1 454.0,281.0 456.0,279.0 458.0,277.4 460.0,278.1 462.0,277.5 464.0,278.2 466.0,276.9 468.0,277.7 470.0,276.6 472.0,276.9 474.0,277.7 476.0,277.5 478.0,278.0 480.0,277.8 482.0,276.4 484.0,277.7 486.0,277.6 488.0,277.0 490.0,276.6 492.0,277.9 494.0,277.8 496.0,278.6 498.0,278.7 500.0,279.3 502.0,278.8 504.0,279.1 506.0,279.1 508.0,278.6 510.0,279.9 512.0,279.3 514.0,280.1 516.0,280.9 518.0,280.7 520.0,279.8 522.0,280.9 524.0,281.2 526.0,280.4 528.0,280.0 530.0,281.0 532.0,280.5 534.0,282.2 536.0,282.2 538.0,282.3 540.0,282.3 542.0,282.9 544.0,283.8 546.0,283.0 548.0,283.0 550.0,283.6 552.0,283.3 554.0,284.0 556.0,284.3 558.0,284.3 560.0,284.9 562.0,285.0 564.0,284.3 566.0,286.0 568.0,285.4 570.0,285.4 572.0,285.5 574.0,286.6 576.0,287.2 578.0,286.6 580.0,286.3 582.0,285.7 584.0,287.1 586.0,286.3 588.0,286.9 590.0,286.8 592.0,286.8 594.0,287.0 596.0,286.8 598.0,286.5 600.0,287.5 602.0,288.5 604.0,288.7 606.0,287.9 608.0,288.8 610.0,287.9 612.0,288.4 614.0,289.5 616.0,290.2 618.0,289.6 620.0,290.3 622.0,289.9 624.0,289.9 626.0,290.2 628.0,291.2 630.0,291.1 632.0,290.6 634.0,290.9 636.0,290.9 638.0,290.4 640.0,291.1 642.0,291.4 644.0,291.2 646.0,291.8 648.0,290.2 650.0,290.7 652.0,291.1 654.0,290.7 656.0,290.3 658.0,291.2 660.0,291.1 662.0,290.7 664.0,290.2 666.0,291.9 668.0,291.3 670.0,290.7 672.0,290.7 674.0,290.8 676.0,292.1 678.0,291.2 680.0,291.2 682.0,290.8 684.0,291.5 686.0,291.2 688.0,291.4 690.0,292.3 692.0,293.1 694.0,293.2 696.0,291.7 698.0,291.9 700.0,292.9 702.0,291.9 704.0,292.1 706.0,292.9 708.0,293.2 710.0,294.2 712.0,294.7 714.0,294.6 716.0,294.3 718.0,294.4 720.0,294.6 722.0,294.5 724.0,295.9 726.0,295.5 728.0,297.1 730.0,297.3 732.0,296.4 734.0,297.2 736.0,297.8 738.0,297.2 740.0,298.0 742.0,297.8 744.0,299.5 746.0,298.9 748.0,300.3 750.0,301.8 752.0,302.4 754.0,301.7 756.0,302.4 758.0,302.2 760.0,302.9 762.0,304.5 764.0,305.3 766.0,304.3 768.0,305.1 770.0,306.2 772.0,306.0 774.0,307.6 776.0,308.7 778.0,308.7 780.0,308.7 782.0,310.0 784.0,310.1 786.0,309.9 788.0,310.3 790.0,310.6 792.0,312.2 794.0,312.3 796.0,312.9 798.0,313.6 800.0,314.4 802.0,313.3 804.0,313.5 806.0,314.8 808.0,315.2 810.0,314.8 812.0,315.4 814.0,314.9 815.0,315.6 816.5,315.6 816.5,120.0 817.5,251.5 819.0,254.5 821.0,255.8 824.0,256.5 999.5,256.5 999.5,120.0" stroke="#ffff00" stroke-width="1.0"/>
<polyline points="309.0,251.5 445.5,251.5 445.5,120.0 447.5,120.0 447.5,295.1 448.0,289.1 450.0,287.0 452.0,284.5 454.0,280.9 456.0,280.4 458.0,279.2 460.0,279.1 462.0,278.0 464.0,277.5 466.0,277.8 468.0,277.2 470.0,277.3 472.0,276.5 474.0,276.5 476.0,277.9 478.0,277.7 480.0,278.0 482.0,278.6 484.0,278.0 486.0,277.2 488.0,278.5 490.0,278.6 492.0,278.8 494.0,278.9 496.0,279.8 498.0,278.9 500.0,279.7 502.0,279.2 504.0,279.6 506.0,280.1 508.0,279.7 510.0,279.1 512.0,279.9 514.0,280.9 516.0,281.1 518.0,281.0 520.0,281.5 522.0,280.9 524.0,280.8 526.0,281.2 528.0,282.6 530.0,281.8 532.0,281.5 534.0,281.5 536.0,281.5 538.0,282.2 540.0,283.2 542.0,284.3 544.0,283.7 546.0,283.7 548.0,283.7 550.0,283.9 552.0,285.1 554.0,285.2 556.0,284.7 558.0,284.4 560.0,285.9 562.0,286.4 564.0,287.0 566.0,286.0 568.0,286.4 570.0,287.5 572.0,287.2 574.0,288.0 576.0,286.7 578.0,288.1 580.0,286.7 582.0,287.1 584.0,286.4 586.0,288.1 588.0,288.5 590.0,289.3 592.0,289.4 594.0,289.8 596.0,289.1 598.0,290.0 600.0,289.9 602.0,289.1 604.0,290.3 606.0,289.5 608.0,288.9 610.0,288.5 612.0,289.4 614.0,289.2 616.0,290.8 618.0,291.5 620.0,290.3 622.0,289.7 624.0,290.5 626.0,290.1 628.0,290.9 630.0,291.9 632.0,291.0 634.0,291.1 636.0,292.2 638.0,291.6 640.0,291.3 642.0,292.4 644.0,292.6 646.0,292.9 648.0,292.6 650.0,292.0 652.0,292.4 654.0,292.9 656.0,292.7 658.0,291.7 660.0,291.6 662.0,291.8 664.0,292.7 666.0,292.6 668.0,292.6 670.0,293.3 672.0,291.9 674.0,292.7 676.0,292.3 678.0,292.7 680.0,293.5 682.0,292.5 684.0,293.8 686.0,292.3 688.0,292.9 690.0,293.1 692.0,292.6 694.0,293.1 696.0,293.2 698.0,293.2 700.0,293.8 702.0,292.7 704.0,293.4 706.0,294.7 708.0,293.9 710.0,295.4 712.0,294.7 714.0,295.7 716.0,295.1 718.0,295.7 720.0,296.1 722.0,295.6 724.0,297.0 726.0,297.2 728.0,298.0 730.0,298.1 732.0,298.3 734.0,298.6 736.0,298.3 738.0,299.8 740.0,298.7 742.0,300.4 744.0,301.4 746.0,301.2 748.0,302.1 750.0,302.5 752.0,302.8 754.0,302.6 756.0,302.9 758.0,303.4 760.0,303.8 762.0,305.8 764.0,305.4 766.0,305.8 768.0,306.3 770.0,307.7 772.0,307.8 774.0,308.4 776.0,308.3 778.0,308.6 780.0,308.7 782.0,309.3 784.0,310.0 786.0,311.9 788.0,312.1 790.0,311.7 792.0,312.5 794.0,312.2 796.0,313.3 798.0,313.6 800.0,314.9 802.0,314.2 804.0,315.5 806.0,314.8 808.0,316.4 810.0,316.4 812.0,315.3 814.0,316.8 815.0,316.6 816.5,316.6 816.5,120.0 817.5,246.5 819.0,249.5 821.0,250.8 824.0,251.5 999.5,251.5 999.5,120.0" stroke="#ff00ff" stroke-width="1.0" stroke-dasharray="3,2"/>
<polyline points="309.0,274.5 445.5,274.5 445.5,120.0 447.5,120.0 447.5,295.6 448.0,289.6 450.0,287.6 452.0,283.8 454.0,283.3 456.0,281.1 458.0,280.6 460.0,279.3 462.0,280.0 464.0,278.9 466.0,279.4 468.0,279.5 470.0,279.4 472.0,278.9 474.0,279.6 476.0,280.1 478.0,278.6 480.0,278.9 482.0,279.9 484.0,279.9 486.0,279.4 488.0,278.9 490.0,280.1 492.0,278.8 494.0,279.8 496.0,280.4 498.0,279.4 500.0,279.6 502.0,279.7 504.0,280.4 506.0,280.4 508.0,281.6 510.0,282.2 512.0,281.4 514.0,282.4 516.0,281.2 518.0,281.0 520.0,282.2 522.0,283.0 524.0,283.5 526.0,284.2 528.0,284.3 530.0,283.3 532.0,284.0 534.0,284.8 536.0,283.5 538.0,284.0 540.0,283.7 542.0,283.7 544.0,284.5 546.0,285.3 548.0,286.3 550.0,285.1 552.0,285.6 554.0,286.9 556.0,287.0 558.0,286.8 560.0,286.2 562.0,286.9 564.0,286.6 566.0,287.4 568.0,287.7 570.0,287.4 572.0,288.3 574.0,287.9 576.0,288.0 578.0,288.8 580.0,288.1 582.0,287.8 584.0,288.5 586.0,288.6 588.0,289.6 590.0,288.9 592.0,288.9 594.0,288.4 596.0,289.1 598.0,289.2 600.0,289.6 602.0,290.5 604.0,289.4 606.0,291.1 608.0,291.2 610.0,291.5 612.0,291.2 614.0,291.3 616.0,291.1 618.0,291.1 620.0,290.8 622.0,291.0 624.0,291.2 626.0,291.4 628.0,292.7 630.0,293.1 632.0,292.9 634.0,291.6 636.0,291.7 638.0,292.3 640.0,292.9 642.0,292.6 644.0,292.9 646.0,293.6 648.0,292.6 650.0,292.6 652.0,293.3 654.0,292.8 656.0,293.4 658.0,293.0 660.0,292.2 662.0,292.8 664.0,292.3 666.0,293.6 668.0,294.2 670.0,293.8 672.0,294.4 674.0,293.3 676.0,293.4 678.0,293.0 680.0,292.6 682.0,294.1 684.0,293.1 686.0,294.5 688.0,294.3 690.0,294.6 692.0,293.4 694.0,294.8 696.0,295.0 698.0,293.8 700.0,293.6 702.0,293.7 704.0,294.6 706.0,294.3 708.0,295.8 710.0,295.9 712.0,296.6 714.0,296.1 716.0,296.9 718.0,297.0 720.0,297.6 722.0,297.6 724.0,298.9 726.0,299.3 728.0,299.6 730.0,298.9 732.0,298.5 734.0,298.5 736.0,298.7 738.0,300.6 740.0,300.1 742.0,301.5 744.0,301.0 746.0,302.0 748.0,301.9 750.0,302.3 752.0,303.7 754.0,304.2 756.0,305.4 758.0,304.7 760.0,304.9 762.0,304.9 764.0,305.6 766.0,307.7 768.0,307.9 770.0,308.2 772.0,308.4 774.0,309.6 776.0,310.3 778.0,309.8 780.0,309.7 782.0,310.3 784.0,312.2 786.0,313.0 788.0,312.6 790.0,312.8 792.0,313.2 794.0,314.3 796.0,315.0 798.0,314.5 800.0,314.7 802.0,314.8 804.0,316.4 806.0,316.4 808.0,317.4 810.0,316.6 812.0,317.3 814.0,317.6 815.0,317.6 816.5,317.6 816.5,120.0 817.5,269.5 819.0,272.5 821.0,273.8 824.0,274.5 999.5,274.5 999.5,120.0" stroke="#ff9900" stroke-width="1.0"/>
<polyline points="309.0,275.5 445.5,275.5 445.5,520.0 447.5,520.0 447.5,295.9 448.0,289.9 450.0,288.5 452.0,286.1 454.0,283.2 456.0,283.0 458.0,281.9 460.0,280.3 462.0,281.4 464.0,280.2 466.0,279.7 468.0,279.6 470.0,279.7 472.0,279.0 474.0,279.9 476.0,280.6 478.0,280.2 480.0,280.7 482.0,280.5 484.0,280.9 486.0,279.8 488.0,279.9 490.0,280.1 492.0,279.5 494.0,281.1 496.0,281.1 498.0,280.2 500.0,281.0 502.0,281.1 504.0,280.8 506.0,280.8 508.0,281.5 510.0,281.1 512.0,282.1 514.0,282.5 516.0,282.0 518.0,283.5 520.0,282.5 522.0,282.5 524.0,284.0 526.0,283.4 528.0,283.8 530.0,284.3 532.0,284.4 534.0,284.7 536.0,285.0 538.0,285.2 540.0,284.5 542.0,286.0 544.0,285.5 546.0,285.1 548.0,285.8 550.0,287.0 552.0,287.1 554.0,287.0 556.0,287.1 558.0,286.8 560.0,287.6 562.0,287.5 564.0,287.1 566.0,287.1 568.0,287.2 570.0,288.5 572.0,289.4 574.0,289.6 576.0,288.7 578.0,288.4 580.0,289.9 582.0,289.4 584.0,289.0 586.0,289.7 588.0,290.2 590.0,290.3 592.0,290.2 594.0,290.0 596.0,290.4 598.0,290.6 600.0,291.2 602.0,291.1 604.0,290.9 606.0,292.2 608.0,291.1 610.0,292.0 612.0,291.8 614.0,292.6 616.0,292.8 618.0,292.7 620.0,292.8 622.0,292.2 624.0,291.7 626.0,293.0 628.0,292.6 630.0,292.3 632.0,293.6 634.0,293.7 636.0,292.6 638.0,293.2 640.0,292.8 642.0,294.1 644.0,293.4 646.0,294.5 648.0,294.3 650.0,293.2 652.0,293.5 654.0,294.8 656.0,294.7 658.0,293.6 660.0,293.7 662.0,293.6 664.0,293.3 666.0,294.2 668.0,294.7 670.0,294.0 672.0,294.5 674.0,295.3 676.0,295.7 678.0,294.4 680.0,293.8 682.0,295.3 684.0,294.7 686.0,294.2 688.0,295.4 690.0,294.7 692.0,295.4 694.0,295.7 696.0,295.0 698.0,295.2 700.0,294.9 702.0,296.1 704.0,295.7 706.0,295.7 708.0,297.1 710.0,296.6 712.0,296.9 714.0,297.4 716.0,296.7 718.0,297.3 720.0,298.6 722.0,299.7 724.0,299.0 726.0,299.2 728.0,298.6 730.0,299.5 732.0,299.7 734.0,300.3 736.0,300.3 738.0,300.5 740.0,302.0 742.0,302.6 744.0,302.3 746.0,302.0 748.0,302.2 750.0,302.6 752.0,303.2 754.0,304.7 756.0,305.4 758.0,305.2 760.0,306.9 762.0,307.5 764.0,308.1 766.0,309.0 768.0,308.6 770.0,309.9 772.0,310.9 774.0,311.4 776.0,310.3 778.0,311.8 780.0,313.0 782.0,312.0 784.0,313.5 786.0,314.3 788.0,313.3 790.0,314.7 792.0,315.4 794.0,315.9 796.0,314.8 798.0,316.5 800.0,315.5 802.0,315.4 804.0,317.3 806.0,317.3 808.0,316.9 810.0,317.4 812.0,318.2 814.0,318.0 815.0,318.6 816.5,318.6 816.5,520.0 817.5,280.5 819.0,277.5 821.0,276.2 824.0,275.5 999.5,275.5 999.5,120.0" stroke="#00dd00" stroke-width="1.0"/>
<polyline points="309.0,288.5 445.5,288.5 445.5,120.0 447.5,120.0 447.5,300.4 448.0,294.4 450.0,291.2 452.0,288.5 454.0,287.5 456.0,285.7 458.0,285.8 460.0,285.9 462.0,284.4 464.0,284.9 466.0,284.6 468.0,284.6 470.0,285.0 472.0,285.4 474.0,284.4 476.0,285.0 478.0,285.1 480.0,285.6 482.0,283.9 484.0,285.1 486.0,284.2 488.0,283.7 490.0,284.5 492.0,285.3 494.0,285.9 496.0,285.0 498.0,285.8 500.0,284.6 502.0,286.2 504.0,285.6 506.0,286.0 508.0,285.4 510.0,285.2 512.0,285.2 514.0,286.5 516.0,287.0 518.0,287.8 520.0,288.3 522.0,287.7 524.0,288.5 526.0,287.7 528.0,288.8 530.0,288.1 532.0,289.4 534.0,288.9 536.0,288.9 538.0,289.2 540.0,288.5 542.0,288.5 544.0,289.5 546.0,290.4 548.0,289.5 550.0,290.0 552.0,290.2 554.0,291.3 556.0,292.2 558.0,290.9 560.0,291.4 562.0,290.9 564.0,292.2 566.0,293.1 568.0,293.0 570.0,292.8 572.0,291.7 574.0,291.6 576.0,291.9 578.0,291.8 580.0,292.0 582.0,293.8 584.0,293.3 586.0,294.3 588.0,294.5 590.0,294.7 592.0,295.1 594.0,294.9 596.0,294.3 598.0,294.4 600.0,294.3 602.0,293.7 604.0,293.6 606.0,294.7 608.0,295.1 610.0,296.2 612.0,296.0 614.0,296.5 616.0,296.0 618.0,296.2 620.0,296.8 622.0,295.5 624.0,295.2 626.0,295.9 628.0,296.0 630.0,296.4 632.0,295.9 634.0,295.9 636.0,295.8 638.0,296.8 640.0,296.1 642.0,295.8 644.0,297.1 646.0,297.1 648.0,296.3 650.0,297.9 652.0,297.6 654.0,298.4 656.0,298.2 658.0,297.9 660.0,297.6 662.0,296.9 664.0,298.4 666.0,297.9 668.0,297.5 670.0,297.1 672.0,297.9 674.0,299.0 676.0,298.2 678.0,298.8 680.0,298.9 682.0,298.5 684.0,298.7 686.0,299.0 688.0,299.5 690.0,298.0 692.0,297.7 694.0,297.8 696.0,297.5 698.0,297.9 700.0,298.4 702.0,298.4 704.0,299.1 706.0,298.6 708.0,300.4 710.0,300.8 712.0,299.9 714.0,300.0 716.0,301.3 718.0,300.7 720.0,301.8 722.0,301.0 724.0,302.1 726.0,302.8 728.0,302.9 730.0,303.7 732.0,304.4 734.0,304.9 736.0,303.4 738.0,303.9 740.0,303.6 742.0,305.1 744.0,304.8 746.0,305.0 748.0,305.1 750.0,305.4 752.0,306.3 754.0,306.8 756.0,308.0 758.0,309.3 760.0,309.8 762.0,309.6 764.0,309.7 766.0,311.1 768.0,310.9 770.0,311.9 772.0,313.2 774.0,313.3 776.0,313.4 778.0,312.9 780.0,313.5 782.0,315.4 784.0,314.6 786.0,314.7 788.0,316.1 790.0,316.3 792.0,317.1 794.0,316.9 796.0,317.0 798.0,317.3 800.0,318.5 802.0,319.1 804.0,318.2 806.0,319.4 808.0,320.1 810.0,320.0 812.0,319.4 814.0,319.3 815.0,320.6 816.5,320.6 816.5,120.0 817.5,283.5 819.0,286.5 821.0,287.8 824.0,288.5 999.5,288.5 999.5,120.0" stroke="#888888" stroke-width="1.0"/>
<polyline points="309.0,277.5 445.5,277.5 445.5,520.0 447.5,520.0 447.5,303.9 448.0,297.9 450.0,295.9 452.0,294.2 454.0,290.8 456.0,288.9 458.0,289.6 460.0,288.6 462.0,288.2 464.0,289.1 466.0,287.5 468.0,288.7 470.0,287.9 472.0,286.6 474.0,288.5 476.0,288.2 478.0,286.9 480.0,288.5 482.0,288.9 484.0,289.0 486.0,288.9 488.0,289.7 490.0,287.5 492.0,289.3 494.0,289.1 496.0,288.1 498.0,288.9 500.0,288.5 502.0,289.4 504.0,289.9 506.0,289.8 508.0,288.8 510.0,289.3 512.0,289.4 514.0,290.7 516.0,291.8 518.0,291.9 520.0,291.5 522.0,290.5 524.0,291.7 526.0,291.1 528.0,292.9 530.0,291.5 532.0,293.3 534.0,291.5 536.0,293.0 538.0,292.6 540.0,293.1 542.0,293.1 544.0,292.9 546.0,293.3 548.0,294.5 550.0,293.9 552.0,293.9 554.0,295.1 556.0,294.0 558.0,294.3 560.0,294.9 562.0,295.3 564.0,294.6 566.0,296.1 568.0,295.9 570.0,294.9 572.0,295.3 574.0,294.8 576.0,295.5 578.0,295.2 580.0,295.6 582.0,296.6 584.0,297.4 586.0,296.8 588.0,297.1 590.0,297.4 592.0,297.8 594.0,298.9 596.0,297.5 598.0,298.6 600.0,298.5 602.0,299.5 604.0,299.4 606.0,297.6 608.0,297.3 610.0,299.2 612.0,298.6 614.0,299.4 616.0,298.4 618.0,299.3 620.0,299.4 622.0,299.6 624.0,298.6 626.0,300.7 628.0,301.3 630.0,301.4 632.0,301.1 634.0,300.0 636.0,299.6 638.0,301.2 640.0,300.4 642.0,300.4 644.0,301.7 646.0,300.8 648.0,302.2 650.0,300.6 652.0,301.8 654.0,300.8 656.0,300.1 658.0,300.7 660.0,301.9 662.0,300.5 664.0,301.3 666.0,302.3 668.0,300.6 670.0,301.2 672.0,301.0 674.0,301.4 676.0,302.5 678.0,301.9 680.0,301.4 682.0,300.9 684.0,302.4 686.0,301.3 688.0,302.4 690.0,303.5 692.0,303.2 694.0,303.6 696.0,301.8 698.0,302.5 700.0,302.7 702.0,301.7 704.0,302.4 706.0,302.6 708.0,302.3 710.0,303.1 712.0,302.8 714.0,305.0 716.0,304.0 718.0,304.8 720.0,305.7 722.0,304.4 724.0,306.5 726.0,307.4 728.0,307.0 730.0,306.9 732.0,307.9 734.0,307.8 736.0,306.9 738.0,308.7 740.0,307.6 742.0,308.5 744.0,309.1 746.0,310.2 748.0,309.8 750.0,310.7 752.0,310.2 754.0,311.6 756.0,311.1 758.0,311.7 760.0,312.6 762.0,313.8 764.0,315.1 766.0,316.0 768.0,315.3 770.0,314.4 772.0,315.8 774.0,316.5 776.0,317.5 778.0,316.4 780.0,318.3 782.0,317.6 784.0,319.5 786.0,320.8 788.0,320.5 790.0,320.5 792.0,321.1 794.0,320.2 796.0,321.5 798.0,322.6 800.0,323.4 802.0,323.3 804.0,323.5 806.0,324.4 808.0,323.4 810.0,323.1 812.0,324.9 814.0,323.4 815.0,324.2 816.5,324.2 816.5,520.0 817.5,282.5 819.0,279.5 821.0,278.2 824.0,277.5 999.5,277.5 999.5,120.0" stroke="#00ee00" stroke-width="1.0"/>
<polyline points="309.0,242.5 445.5,242.5 445.5,120.0 447.5,120.0 447.5,315.5 448.0,309.5 450.0,307.2 452.0,306.0 454.0,303.8 456.0,302.6 458.0,302.4 460.0,302.3 462.0,301.6 464.0,301.7 466.0,302.6 468.0,301.0 470.0,300.5 472.0,300.1 474.0,300.4 476.0,300.3 478.0,302.4 480.0,301.6 482.0,302.9 484.0,301.4 486.0,302.7 488.0,302.3 490.0,302.6 492.0,302.7 494.0,301.8 496.0,301.5 498.0,302.6 500.0,301.8 502.0,301.4 504.0,303.2 506.0,303.6 508.0,303.0 510.0,303.5 512.0,304.7 514.0,303.8 516.0,303.2 518.0,303.8 520.0,303.6 522.0,304.1 524.0,303.6 526.0,305.3 528.0,306.1 530.0,305.5 532.0,305.4 534.0,305.2 536.0,306.9 538.0,307.4 540.0,307.2 542.0,306.1 544.0,305.8 546.0,307.3 548.0,306.5 550.0,307.6 552.0,307.4 554.0,306.6 556.0,306.8 558.0,308.7 560.0,308.1 562.0,308.8 564.0,309.4 566.0,308.9 568.0,309.0 570.0,310.0 572.0,310.1 574.0,309.7 576.0,309.7 578.0,309.6 580.0,309.6 582.0,310.3 584.0,309.6 586.0,310.9 588.0,310.1 590.0,309.7 592.0,311.4 594.0,309.9 596.0,310.3 598.0,310.9 600.0,311.0 602.0,312.0 604.0,312.1 606.0,311.8 608.0,310.6 610.0,312.6 612.0,311.9 614.0,311.7 616.0,311.4 618.0,311.3 620.0,311.2 622.0,311.3 624.0,312.7 626.0,312.4 628.0,312.9 630.0,313.5 632.0,312.3 634.0,313.6 636.0,312.7 638.0,313.9 640.0,314.5 642.0,313.7 644.0,313.2 646.0,313.5 648.0,314.5 650.0,315.1 652.0,314.8 654.0,313.9 656.0,313.6 658.0,314.3 660.0,313.7 662.0,314.6 664.0,313.9 666.0,314.2 668.0,314.2 670.0,314.3 672.0,315.1 674.0,315.5 676.0,315.5 678.0,315.1 680.0,314.5 682.0,314.2 684.0,314.4 686.0,315.4 688.0,315.5 690.0,314.0 692.0,313.9 694.0,313.5 696.0,313.9 698.0,315.4 700.0,315.4 702.0,314.2 704.0,315.7 706.0,316.1 708.0,316.1 710.0,315.2 712.0,315.0 714.0,315.2 716.0,317.4 718.0,317.2 720.0,316.4 722.0,318.2 724.0,318.1 726.0,317.9 728.0,318.2 730.0,318.0 732.0,317.7 734.0,319.5 736.0,320.6 738.0,319.8 740.0,320.3 742.0,321.5 744.0,320.2 746.0,322.3 748.0,321.2 750.0,321.8 752.0,321.5 754.0,322.0 756.0,322.4 758.0,323.0 760.0,324.0 762.0,325.1 764.0,325.4 766.0,326.4 768.0,327.6 770.0,326.6 772.0,326.8 774.0,327.8 776.0,327.5 778.0,327.3 780.0,329.4 782.0,329.7 784.0,329.8 786.0,330.7 788.0,330.5 790.0,330.9 792.0,330.7 794.0,331.4 796.0,331.6 798.0,332.4 800.0,333.7 802.0,334.1 804.0,334.1 806.0,334.1 808.0,335.0 810.0,333.8 812.0,335.4 814.0,334.3 815.0,334.9 816.5,334.9 816.5,120.0 817.5,237.5 819.0,240.5 821.0,241.8 824.0,242.5 999.5,242.5 999.5,120.0" stroke="#00ffff" stroke-width="1.0"/>
<polyline points="309.0,269.5 445.5,269.5 445.5,520.0 447.5,520.0 447.5,401.4 448.0,395.4 450.0,392.2 452.0,390.5 454.0,387.5 456.0,386.5 458.0,385.0 460.0,384.8 462.0,385.9 464.0,383.9 466.0,383.8 468.0,383.0 470.0,382.9 472.0,384.7 474.0,383.6 476.0,384.0 478.0,383.7 480.0,384.5 482.0,384.1 484.0,383.2 486.0,383.7 488.0,383.8 490.0,384.9 492.0,384.8 494.0,383.8 496.0,384.8 498.0,384.4 500.0,385.0 502.0,384.6 504.0,385.1 506.0,386.4 508.0,386.3 510.0,387.1 512.0,387.5 514.0,387.4 516.0,387.6 518.0,387.2 520.0,387.8 522.0,388.6 524.0,387.3 526.0,389.2 528.0,388.5 530.0,387.8 532.0,387.8 534.0,388.4 536.0,388.1 538.0,389.0 540.0,389.5 542.0,390.5 544.0,390.5 546.0,391.9 548.0,391.8 550.0,391.0 552.0,392.4 554.0,392.5 556.0,393.5 558.0,393.3 560.0,394.0 562.0,392.5 564.0,392.3 566.0,394.1 568.0,392.4 570.0,394.3 572.0,395.0 574.0,393.4 576.0,392.9 578.0,394.9 580.0,395.8 582.0,396.0 584.0,395.8 586.0,396.0 588.0,394.9 590.0,393.9 592.0,395.3 594.0,396.5 596.0,397.3 598.0,396.5 600.0,395.0 602.0,395.1 604.0,395.9 606.0,395.7 608.0,395.3 610.0,395.7 612.0,396.7 614.0,396.2 616.0,396.1 618.0,396.3 620.0,396.2 622.0,398.2 624.0,399.2 626.0,398.0 628.0,398.8 630.0,399.8 632.0,398.5 634.0,398.3 636.0,399.8 638.0,400.0 640.0,399.7 642.0,400.1 644.0,399.8 646.0,399.0 648.0,399.7 650.0,400.3 652.0,398.6 654.0,398.8 656.0,398.8 658.0,400.4 660.0,399.5 662.0,400.2 664.0,399.9 666.0,399.6 668.0,399.9 670.0,401.1 672.0,400.9 674.0,400.2 676.0,399.4 678.0,399.7 680.0,400.1 682.0,400.8 684.0,402.0 686.0,400.7 688.0,401.9 690.0,402.3 692.0,401.2 694.0,400.3 696.0,400.1 698.0,401.8 700.0,400.5 702.0,401.6 704.0,402.3 706.0,401.4 708.0,401.0 710.0,402.6 712.0,401.9 714.0,403.2 716.0,404.9 718.0,404.4 720.0,404.1 722.0,403.6 724.0,404.2 726.0,404.7 728.0,404.5 730.0,406.2 732.0,406.7 734.0,407.4 736.0,406.3 738.0,406.5 740.0,408.6 742.0,407.3 744.0,408.2 746.0,410.1 748.0,409.6 750.0,409.7 752.0,411.2 754.0,411.1 756.0,411.7 758.0,412.4 760.0,412.8 762.0,414.2 764.0,415.3 766.0,416.2 768.0,417.5 770.0,415.9 772.0,416.3 774.0,418.7 776.0,419.4 778.0,420.0 780.0,419.1 782.0,419.0 784.0,419.7 786.0,422.0 788.0,422.8 790.0,422.5 792.0,423.3 794.0,424.0 796.0,423.3 798.0,422.8 800.0,424.7 802.0,425.4 804.0,426.1 806.0,426.4 808.0,425.8 810.0,426.6 812.0,426.3 814.0,427.9 815.0,427.1 816.5,427.1 816.5,520.0 817.5,274.5 819.0,271.5 821.0,270.2 824.0,269.5 999.5,269.5 999.5,120.0" stroke="#00ffff" stroke-width="1.0"/>
<polyline points="309.0,302.5 445.5,302.5 445.5,520.0 447.5,520.0 447.5,418.2 448.0,412.2 450.0,408.9 452.0,405.2 454.0,404.4 456.0,402.7 458.0,401.4 460.0,401.4 462.0,401.8 464.0,402.5 466.0,401.3 468.0,402.0 470.0,402.0 472.0,400.4 474.0,399.5 476.0,399.4 478.0,401.1 480.0,401.1 482.0,401.9 484.0,402.4 486.0,401.9 488.0,401.4 490.0,400.2 492.0,399.7 494.0,401.5 496.0,401.9 498.0,402.5 500.0,402.3 502.0,402.7 504.0,402.9 506.0,403.8 508.0,402.4 510.0,402.9 512.0,402.8 514.0,404.2 516.0,405.0 518.0,403.9 520.0,403.3 522.0,403.6 524.0,404.0 526.0,405.5 528.0,405.2 530.0,406.1 532.0,405.5 534.0,406.0 536.0,405.5 538.0,406.6 540.0,406.9 542.0,407.9 544.0,408.7 546.0,408.1 548.0,406.9 550.0,408.8 552.0,409.6 554.0,408.9 556.0,408.9 558.0,410.1 560.0,409.0 562.0,408.8 564.0,410.0 566.0,410.4 568.0,410.7 570.0,411.3 572.0,410.8 574.0,410.6 576.0,410.1 578.0,410.1 580.0,410.5 582.0,411.0 584.0,412.0 586.0,412.1 588.0,412.0 590.0,411.8 592.0,412.4 594.0,412.2 596.0,413.2 598.0,413.3 600.0,413.6 602.0,413.0 604.0,413.3 606.0,414.0 608.0,414.9 610.0,414.3 612.0,413.7 614.0,414.5 616.0,413.5 618.0,413.8 620.0,413.3 622.0,414.5 624.0,414.3 626.0,414.7 628.0,415.9 630.0,416.1 632.0,414.7 634.0,415.2 636.0,414.4 638.0,416.1 640.0,416.0 642.0,416.8 644.0,415.8 646.0,416.8 648.0,415.5 650.0,416.9 652.0,416.3 654.0,415.3 656.0,417.1 658.0,417.5 660.0,416.2 662.0,416.7 664.0,416.7 666.0,415.9 668.0,416.4 670.0,417.9 672.0,417.0 674.0,417.7 676.0,418.0 678.0,418.1 680.0,417.8 682.0,418.5 684.0,417.4 686.0,417.4 688.0,417.4 690.0,416.6 692.0,417.3 694.0,418.2 696.0,418.1 698.0,417.2 700.0,417.1 702.0,417.9 704.0,417.5 706.0,417.8 708.0,419.4 710.0,418.7 712.0,418.7 714.0,419.0 716.0,420.2 718.0,419.6 720.0,421.2 722.0,421.7 724.0,422.6 726.0,423.1 728.0,423.4 730.0,423.3 732.0,422.9 734.0,423.7 736.0,423.1 738.0,423.3 740.0,424.7 742.0,425.4 744.0,424.9 746.0,425.9 748.0,426.9 750.0,426.8 752.0,428.1 754.0,427.8 756.0,428.0 758.0,429.1 760.0,429.6 762.0,431.2 764.0,431.4 766.0,431.5 768.0,433.3 770.0,434.3 772.0,434.9 774.0,433.9 776.0,434.3 778.0,434.5 780.0,436.4 782.0,436.9 784.0,436.5 786.0,438.8 788.0,437.9 790.0,437.9 792.0,440.1 794.0,440.1 796.0,441.3 798.0,441.3 800.0,440.4 802.0,441.2 804.0,442.4 806.0,441.2 808.0,442.9 810.0,442.7 812.0,443.3 814.0,443.2 815.0,443.9 816.5,443.9 816.5,520.0 817.5,307.5 819.0,304.5 821.0,303.2 824.0,302.5 999.5,302.5 999.5,120.0" stroke="#00ee00" stroke-width="1.0"/>
<polyline points="309.0,281.5 445.5,281.5 445.5,520.0 447.5,520.0 447.5,425.6 448.0,419.6 450.0,416.5 452.0,414.0 454.0,412.8 456.0,410.4 458.0,408.7 460.0,408.5 462.0,409.6 464.0,408.2 466.0,409.0 468.0,408.8 470.0,407.2 472.0,407.9 474.0,407.9 476.0,407.9 478.0,409.5 480.0,407.7 482.0,407.0 484.0,409.2 486.0,408.6 488.0,407.9 490.0,408.1 492.0,408.3 494.0,409.9 496.0,408.7 498.0,408.5 500.0,409.6 502.0,410.0 504.0,411.4 506.0,411.8 508.0,410.8 510.0,410.3 512.0,411.9 514.0,413.1 516.0,411.1 518.0,412.5 520.0,413.5 522.0,413.4 524.0,412.5 526.0,413.8 528.0,414.3 530.0,413.2 532.0,414.2 534.0,413.6 536.0,413.1 538.0,413.9 540.0,414.3 542.0,414.8 544.0,415.8 546.0,416.8 548.0,417.7 550.0,418.2 552.0,418.6 554.0,418.4 556.0,417.2 558.0,416.7 560.0,417.8 562.0,418.2 564.0,418.8 566.0,417.7 568.0,417.6 570.0,419.6 572.0,419.6 574.0,420.0 576.0,418.7 578.0,419.2 580.0,420.8 582.0,420.8 584.0,421.8 586.0,420.2 588.0,420.5 590.0,421.6 592.0,421.2 594.0,422.0 596.0,421.9 598.0,420.8 600.0,420.5 602.0,422.8 604.0,421.5 606.0,421.4 608.0,421.8 610.0,423.1 612.0,424.0 614.0,423.5 616.0,423.5 618.0,424.4 620.0,423.5 622.0,423.5 624.0,424.3 626.0,424.8 628.0,423.5 630.0,423.4 632.0,423.4 634.0,425.0 636.0,425.5 638.0,426.5 640.0,426.3 642.0,425.0 644.0,425.9 646.0,426.8 648.0,425.5 650.0,424.3 652.0,424.8 654.0,424.8 656.0,424.6 658.0,424.2 660.0,424.3 662.0,426.4 664.0,425.0 666.0,426.0 668.0,425.4 670.0,425.2 672.0,426.8 674.0,426.0 676.0,425.5 678.0,426.1 680.0,427.0 682.0,427.1 684.0,428.3 686.0,427.7 688.0,428.1 690.0,428.9 692.0,428.7 694.0,429.6 696.0,429.4 698.0,428.7 700.0,428.7 702.0,430.9 704.0,432.0 706.0,433.3 708.0,433.5 710.0,433.7 712.0,433.1 714.0,435.0 716.0,434.2 718.0,435.2 720.0,435.2 722.0,436.2 724.0,436.8 726.0,437.7 728.0,439.1 730.0,439.6 732.0,439.4 734.0,441.2 736.0,442.1 738.0,443.0 740.0,441.7 742.0,443.4 744.0,445.3 746.0,444.9 748.0,445.2 750.0,447.5 752.0,447.7 754.0,448.4 756.0,450.4 758.0,450.5 760.0,450.6 762.0,451.3 764.0,452.5 766.0,454.4 768.0,454.9 770.0,456.7 772.0,456.1 774.0,456.9 776.0,458.8 778.0,459.7 780.0,460.7 782.0,462.7 784.0,462.3 786.0,462.6 788.0,462.9 790.0,464.7 792.0,465.2 794.0,466.3 796.0,465.9 798.0,466.2 800.0,467.7 802.0,469.6 804.0,469.5 806.0,471.5 808.0,471.8 810.0,471.9 812.0,473.3 814.0,472.8 815.0,473.6 816.5,473.6 816.5,520.0 817.5,286.5 819.0,283.5 821.0,282.2 824.0,281.5 999.5,281.5 999.5,120.0" stroke="#ff00ff" stroke-width="1.0"/>
<polyline points="309.0,278.5 445.5,278.5 445.5,520.0 447.5,520.0 447.5,427.8 448.0,421.8 450.0,419.0 452.0,416.2 454.0,415.6 456.0,413.9 458.0,413.1 460.0,411.4 462.0,411.6 464.0,412.2 466.0,411.5 468.0,412.0 470.0,411.8 472.0,410.7 474.0,409.5 476.0,411.0 478.0,410.0 480.0,409.4 482.0,411.0 484.0,411.9 486.0,412.2 488.0,412.7 490.0,411.1 492.0,410.3 494.0,410.2 496.0,412.3 498.0,411.2 500.0,411.1 502.0,410.9 504.0,411.0 506.0,411.2 508.0,412.2 510.0,412.3 512.0,412.8 514.0,414.7 516.0,413.7 518.0,415.0 520.0,415.5 522.0,415.4 524.0,415.6 526.0,416.3 528.0,416.2 530.0,415.5 532.0,415.7 534.0,415.7 536.0,416.2 538.0,418.0 540.0,417.5 542.0,416.6 544.0,417.4 546.0,418.7 548.0,418.4 550.0,419.1 552.0,418.0 554.0,417.8 556.0,419.3 558.0,418.5 560.0,419.0 562.0,419.5 564.0,419.4 566.0,419.2 568.0,419.1 570.0,421.5 572.0,421.8 574.0,422.6 576.0,422.0 578.0,422.9 580.0,423.2 582.0,422.8 584.0,422.6 586.0,422.6 588.0,422.0 590.0,422.3 592.0,423.3 594.0,422.6 596.0,424.0 598.0,423.8 600.0,424.1 602.0,424.8 604.0,424.8 606.0,423.6 608.0,423.6 610.0,423.2 612.0,423.2 614.0,425.5 616.0,425.6 618.0,426.7 620.0,426.7 622.0,425.7 624.0,427.0 626.0,427.5 628.0,426.7 630.0,425.6 632.0,425.8 634.0,425.6 636.0,426.0 638.0,425.5 640.0,426.9 642.0,428.1 644.0,426.7 646.0,427.6 648.0,427.5 650.0,427.3 652.0,428.3 654.0,427.4 656.0,428.2 658.0,426.7 660.0,428.4 662.0,427.2 664.0,426.4 666.0,428.2 668.0,428.5 670.0,428.6 672.0,428.9 674.0,428.1 676.0,427.2 678.0,427.5 680.0,429.1 682.0,430.1 684.0,428.8 686.0,429.1 688.0,429.4 690.0,430.8 692.0,429.4 694.0,431.1 696.0,430.5 698.0,431.2 700.0,430.7 702.0,430.9 704.0,433.3 706.0,433.6 708.0,435.2 710.0,435.9 712.0,436.3 714.0,435.2 716.0,436.5 718.0,438.3 720.0,438.1 722.0,437.4 724.0,437.8 726.0,440.3 728.0,441.6 730.0,440.6 732.0,440.9 734.0,442.3 736.0,442.7 738.0,442.5 740.0,444.7 742.0,445.3 744.0,445.4 746.0,445.2 748.0,446.8 750.0,448.6 752.0,448.4 754.0,448.6 756.0,450.8 758.0,452.6 760.0,452.5 762.0,453.3 764.0,454.5 766.0,455.2 768.0,455.1 770.0,456.0 772.0,456.8 774.0,457.6 776.0,458.2 778.0,459.7 780.0,460.4 782.0,462.7 784.0,462.9 786.0,465.0 788.0,466.0 790.0,465.6 792.0,465.6 794.0,467.0 796.0,467.6 798.0,468.4 800.0,468.1 802.0,469.4 804.0,470.9 806.0,471.0 808.0,471.0 810.0,473.1 812.0,472.7 814.0,474.7 815.0,473.9 816.5,473.9 816.5,520.0 817.5,283.5 819.0,280.5 821.0,279.2 824.0,278.5 999.5,278.5 999.5,120.0" stroke="#ffbbbb" stroke-width="1.0"/>
<polyline points="309.0,291.5 445.5,291.5 445.5,520.0 447.5,520.0 447.5,433.9 448.0,427.9 450.0,425.2 452.0,422.6 454.0,419.1 456.0,418.4 458.0,418.1 460.0,418.1 462.0,415.8 464.0,416.1 466.0,415.9 468.0,415.3 470.0,416.1 472.0,415.4 474.0,415.0 476.0,416.3 478.0,415.9 480.0,414.9 482.0,414.6 484.0,415.1 486.0,414.1 488.0,415.3 490.0,416.2 492.0,415.7 494.0,416.7 496.0,417.5 498.0,416.9 500.0,417.2 502.0,415.9 504.0,415.5 506.0,418.1 508.0,417.2 510.0,416.9 512.0,418.9 514.0,419.3 516.0,417.9 518.0,418.2 520.0,418.2 522.0,418.5 524.0,418.0 526.0,419.5 528.0,419.5 530.0,420.0 532.0,419.7 534.0,419.6 536.0,419.5 538.0,422.0 540.0,422.7 542.0,422.6 544.0,421.5 546.0,421.4 548.0,421.4 550.0,422.2 552.0,421.9 554.0,422.6 556.0,422.8 558.0,423.0 560.0,424.6 562.0,424.7 564.0,425.0 566.0,424.9 568.0,425.5 570.0,426.5 572.0,425.7 574.0,424.8 576.0,425.8 578.0,426.0 580.0,427.3 582.0,426.0 584.0,427.8 586.0,426.2 588.0,427.2 590.0,427.4 592.0,427.3 594.0,428.9 596.0,429.1 598.0,427.8 600.0,428.4 602.0,429.1 604.0,427.8 606.0,427.6 608.0,429.1 610.0,430.2 612.0,429.9 614.0,429.8 616.0,430.1 618.0,429.7 620.0,431.4 622.0,432.4 624.0,431.5 626.0,430.0 628.0,430.7 630.0,432.2 632.0,431.3 634.0,430.5 636.0,430.5 638.0,432.0 640.0,432.3 642.0,431.5 644.0,432.3 646.0,432.9 648.0,433.8 650.0,433.8 652.0,432.7 654.0,433.4 656.0,434.1 658.0,434.2 660.0,433.9 662.0,433.4 664.0,433.1 666.0,434.0 668.0,433.7 670.0,433.9 672.0,432.7 674.0,431.9 676.0,432.2 678.0,433.2 680.0,433.6 682.0,433.0 684.0,432.9 686.0,435.3 688.0,433.9 690.0,436.0 692.0,436.5 694.0,436.4 696.0,437.7 698.0,437.5 700.0,435.8 702.0,438.3 704.0,438.1 706.0,439.8 708.0,440.6 710.0,439.4 712.0,439.1 714.0,439.3 716.0,441.9 718.0,443.3 720.0,442.6 722.0,442.4 724.0,443.5 726.0,445.5 728.0,446.4 730.0,447.5 732.0,448.6 734.0,448.8 736.0,449.5 738.0,447.8 740.0,447.6 742.0,450.6 744.0,451.6 746.0,451.7 748.0,451.7 750.0,452.9 752.0,453.9 754.0,455.3 756.0,456.2 758.0,456.4 760.0,456.7 762.0,457.8 764.0,458.6 766.0,459.4 768.0,461.1 770.0,461.5 772.0,464.2 774.0,465.0 776.0,465.6 778.0,466.9 780.0,466.9 782.0,466.9 784.0,467.6 786.0,469.2 788.0,470.4 790.0,471.1 792.0,471.9 794.0,474.1 796.0,472.9 798.0,474.2 800.0,474.9 802.0,475.3 804.0,477.1 806.0,476.8 808.0,476.6 810.0,477.3 812.0,480.2 814.0,479.9 815.0,480.4 816.5,480.4 816.5,520.0 817.5,296.5 819.0,293.5 821.0,292.2 824.0,291.5 999.5,291.5 999.5,120.0" stroke="#00ee00" stroke-width="1.0"/>
<polyline points="309.0,288.5 445.5,288.5 445.5,520.0 447.5,520.0 447.5,436.7 448.0,430.7 450.0,427.9 452.0,425.4 454.0,423.5 456.0,422.4 458.0,419.9 460.0,420.5 462.0,419.3 464.0,418.3 466.0,417.2 468.0,417.6 470.0,416.7 472.0,416.9 474.0,417.8 476.0,418.6 478.0,418.8 480.0,417.4 482.0,416.9 484.0,417.2 486.0,418.1 488.0,419.1 490.0,419.5 492.0,420.0 494.0,419.4 496.0,419.4 498.0,418.8 500.0,418.8 502.0,418.7 504.0,419.7 506.0,420.4 508.0,420.7 510.0,420.5 512.0,420.8 514.0,420.6 516.0,422.1 518.0,422.2 520.0,422.8 522.0,423.3 524.0,422.4 526.0,421.9 528.0,422.3 530.0,424.1 532.0,424.6 534.0,424.1 536.0,424.9 538.0,424.4 540.0,425.6 542.0,424.4 544.0,425.7 546.0,426.9 548.0,426.1 550.0,426.1 552.0,425.5 554.0,425.8 556.0,426.0 558.0,426.4 560.0,426.2 562.0,426.8 564.0,426.7 566.0,427.9 568.0,428.1 570.0,427.9 572.0,429.6 574.0,428.8 576.0,429.2 578.0,430.4 580.0,430.6 582.0,431.2 584.0,430.8 586.0,431.3 588.0,429.7 590.0,430.9 592.0,430.5 594.0,430.4 596.0,431.6 598.0,432.1 600.0,431.4 602.0,431.4 604.0,431.3 606.0,432.9 608.0,432.9 610.0,432.1 612.0,432.6 614.0,431.8 616.0,432.2 618.0,433.0 620.0,434.5 622.0,434.9 624.0,434.4 626.0,434.9 628.0,433.9 630.0,434.8 632.0,435.8 634.0,434.2 636.0,435.6 638.0,436.2 640.0,435.0 642.0,435.7 644.0,436.4 646.0,434.7 648.0,434.9 650.0,435.4 652.0,436.0 654.0,435.1 656.0,435.9 658.0,436.2 660.0,436.7 662.0,436.6 664.0,436.9 666.0,436.5 668.0,436.2 670.0,436.0 672.0,435.8 674.0,435.9 676.0,436.1 678.0,436.0 680.0,435.4 682.0,436.1 684.0,437.9 686.0,437.2 688.0,438.8 690.0,439.2 692.0,438.6 694.0,438.1 696.0,439.7 698.0,440.7 700.0,439.7 702.0,440.7 704.0,441.7 706.0,442.1 708.0,441.5 710.0,441.9 712.0,443.7 714.0,444.5 716.0,445.2 718.0,445.0 720.0,446.7 722.0,447.5 724.0,447.5 726.0,448.8 728.0,448.3 730.0,449.1 732.0,449.8 734.0,451.5 736.0,452.4 738.0,451.7 740.0,452.9 742.0,452.9 744.0,454.8 746.0,456.1 748.0,456.7 750.0,455.9 752.0,456.8 754.0,457.4 756.0,459.0 758.0,459.0 760.0,459.6 762.0,460.6 764.0,463.3 766.0,464.3 768.0,465.8 770.0,467.2 772.0,467.3 774.0,468.7 776.0,468.7 778.0,469.8 780.0,469.7 782.0,470.9 784.0,471.1 786.0,472.7 788.0,475.0 790.0,476.5 792.0,476.8 794.0,475.6 796.0,477.9 798.0,478.1 800.0,478.9 802.0,479.0 804.0,480.3 806.0,480.1 808.0,480.0 810.0,481.2 812.0,481.4 814.0,482.0 815.0,483.3 816.5,483.3 816.5,520.0 817.5,293.5 819.0,290.5 821.0,289.2 824.0,288.5 999.5,288.5 999.5,120.0" stroke="#888888" stroke-width="1.0"/>
<polyline points="309.0,293.5 445.5,293.5 445.5,520.0 447.5,520.0 447.5,439.6 448.0,433.6 450.0,431.0 452.0,427.9 454.0,426.0 456.0,423.3 458.0,423.3 460.0,422.3 462.0,422.2 464.0,422.0 466.0,422.1 468.0,420.2 470.0,419.5 472.0,420.4 474.0,420.4 476.0,420.9 478.0,420.2 480.0,421.5 482.0,419.6 484.0,420.8 486.0,420.4 488.0,419.4 490.0,420.8 492.0,419.7 494.0,419.9 496.0,420.3 498.0,420.2 500.0,420.4 502.0,420.4 504.0,422.6 506.0,421.6 508.0,421.6 510.0,421.6 512.0,423.9 514.0,424.0 516.0,424.9 518.0,425.8 520.0,425.1 522.0,424.7 524.0,424.8 526.0,424.7 528.0,425.7 530.0,427.2 532.0,426.7 534.0,427.3 536.0,428.1 538.0,428.4 540.0,428.3 542.0,428.1 544.0,427.0 546.0,427.6 548.0,429.2 550.0,428.9 552.0,429.6 554.0,428.9 556.0,429.7 558.0,429.2 560.0,430.7 562.0,431.5 564.0,429.9 566.0,431.1 568.0,430.2 570.0,432.2 572.0,431.1 574.0,430.7 576.0,432.6 578.0,432.7 580.0,431.3 582.0,432.2 584.0,433.5 586.0,432.4 588.0,433.7 590.0,433.1 592.0,433.4 594.0,433.5 596.0,432.8 598.0,433.5 600.0,434.3 602.0,434.9 604.0,435.0 606.0,434.3 608.0,435.3 610.0,434.9 612.0,436.5 614.0,435.1 616.0,436.5 618.0,435.4 620.0,436.3 622.0,436.2 624.0,436.6 626.0,437.5 628.0,438.2 630.0,436.5 632.0,438.2 634.0,438.3 636.0,436.9 638.0,438.0 640.0,438.8 642.0,437.9 644.0,439.0 646.0,437.6 648.0,437.9 650.0,437.5 652.0,438.9 654.0,438.1 656.0,437.8 658.0,439.6 660.0,438.8 662.0,438.7 664.0,439.3 666.0,438.3 668.0,439.6 670.0,439.8 672.0,439.4 674.0,440.1 676.0,440.6 678.0,438.8 680.0,440.5 682.0,440.2 684.0,441.0 686.0,441.2 688.0,442.3 690.0,442.4 692.0,441.2 694.0,440.8 696.0,441.6 698.0,441.7 700.0,441.9 702.0,443.3 704.0,444.1 706.0,444.5 708.0,446.0 710.0,445.4 712.0,446.3 714.0,447.1 716.0,448.2 718.0,449.7 720.0,449.9 722.0,448.9 724.0,450.5 726.0,450.8 728.0,451.5 730.0,452.6 732.0,452.5 734.0,454.3 736.0,454.3 738.0,454.7 740.0,455.7 742.0,455.5 744.0,456.7 746.0,459.5 748.0,458.8 750.0,459.8 752.0,461.8 754.0,462.3 756.0,463.5 758.0,465.1 760.0,466.2 762.0,466.2 764.0,466.6 766.0,466.4 768.0,468.9 770.0,468.8 772.0,470.3 774.0,470.5 776.0,472.9 778.0,473.5 780.0,473.5 782.0,475.3 784.0,475.3 786.0,476.6 788.0,477.5 790.0,479.7 792.0,480.4 794.0,480.1 796.0,480.7 798.0,481.7 800.0,483.5 802.0,483.3 804.0,484.7 806.0,483.9 808.0,484.1 810.0,486.4 812.0,486.5 814.0,486.2 815.0,487.8 816.5,487.8 816.5,520.0 817.5,298.5 819.0,295.5 821.0,294.2 824.0,293.5 999.5,293.5 999.5,120.0" stroke="#007700" stroke-width="1.0"/>
<polyline points="309.0,287.5 445.5,287.5 445.5,520.0 447.5,520.0 447.5,441.5 448.0,435.5 450.0,434.1 452.0,431.4 454.0,429.1 456.0,427.5 458.0,426.3 460.0,423.3 462.0,423.9 464.0,422.8 466.0,423.6 468.0,422.7 470.0,422.6 472.0,422.7 474.0,422.9 476.0,423.7 478.0,424.6 480.0,423.0 482.0,423.9 484.0,424.5 486.0,423.3 488.0,422.1 490.0,422.9 492.0,424.0 494.0,423.8 496.0,422.8 498.0,424.2 500.0,423.8 502.0,425.5 504.0,424.1 506.0,425.1 508.0,425.0 510.0,427.0 512.0,425.3 514.0,427.1 516.0,426.5 518.0,426.4 520.0,426.0 522.0,427.0 524.0,428.8 526.0,429.8 528.0,430.2 530.0,429.5 532.0,428.3 534.0,428.9 536.0,429.7 538.0,429.1 540.0,431.2 542.0,429.4 544.0,429.4 546.0,429.4 548.0,429.6 550.0,429.5 552.0,430.1 554.0,431.0 556.0,433.1 558.0,432.9 560.0,433.2 562.0,432.7 564.0,432.2 566.0,433.3 568.0,434.3 570.0,432.9 572.0,434.2 574.0,433.5 576.0,434.8 578.0,434.4 580.0,433.7 582.0,433.6 584.0,435.7 586.0,435.8 588.0,434.6 590.0,436.7 592.0,435.8 594.0,435.5 596.0,434.8 598.0,435.5 600.0,436.7 602.0,438.3 604.0,437.1 606.0,437.5 608.0,436.5 610.0,438.1 612.0,437.6 614.0,437.8 616.0,437.7 618.0,439.4 620.0,440.7 622.0,438.7 624.0,439.1 626.0,438.3 628.0,440.1 630.0,441.3 632.0,439.4 634.0,440.5 636.0,439.8 638.0,440.0 640.0,440.5 642.0,440.2 644.0,440.9 646.0,440.2 648.0,440.6 650.0,440.3 652.0,440.5 654.0,439.7 656.0,440.2 658.0,439.6 660.0,441.0 662.0,441.0 664.0,441.0 666.0,442.5 668.0,440.8 670.0,441.4 672.0,441.9 674.0,442.2 676.0,442.8 678.0,441.8 680.0,443.2 682.0,443.2 684.0,441.7 686.0,443.0 688.0,443.4 690.0,445.0 692.0,445.1 694.0,445.3 696.0,445.5 698.0,445.9 700.0,445.5 702.0,446.0 704.0,446.7 706.0,445.9 708.0,447.5 710.0,448.2 712.0,448.9 714.0,449.9 716.0,451.0 718.0,451.0 720.0,452.0 722.0,451.7 724.0,454.3 726.0,454.6 728.0,455.3 730.0,456.1 732.0,454.6 734.0,455.0 736.0,456.1 738.0,457.1 740.0,457.8 742.0,459.1 744.0,460.4 746.0,461.9 748.0,462.8 750.0,462.9 752.0,464.8 754.0,466.0 756.0,467.4 758.0,465.7 760.0,467.4 762.0,467.4 764.0,470.1 766.0,471.9 768.0,472.3 770.0,472.1 772.0,474.3 774.0,474.6 776.0,475.8 778.0,475.4 780.0,475.6 782.0,478.5 784.0,480.2 786.0,480.0 788.0,479.6 790.0,480.8 792.0,483.4 794.0,482.6 796.0,484.4 798.0,484.2 800.0,486.4 802.0,485.8 804.0,487.9 806.0,487.7 808.0,486.6 810.0,487.9 812.0,488.8 814.0,488.8 815.0,490.3 816.5,490.3 816.5,520.0 817.5,292.5 819.0,289.5 821.0,288.2 824.0,287.5 999.5,287.5 999.5,120.0" stroke="#ff0000" stroke-width="1.0"/>
<polyline points="309.0,292.5 445.5,292.5 445.5,520.0 447.5,520.0 447.5,444.4 448.0,438.4 450.0,433.7 452.0,431.4 454.0,430.2 456.0,429.2 458.0,427.0 460.0,426.7 462.0,425.6 464.0,425.4 466.0,423.9 468.0,424.8 470.0,424.7 472.0,423.9 474.0,423.9 476.0,425.1 478.0,424.7 480.0,426.1 482.0,426.7 484.0,426.6 486.0,424.4 488.0,423.6 490.0,424.0 492.0,424.4 494.0,425.7 496.0,426.6 498.0,426.4 500.0,426.7 502.0,426.8 504.0,425.4 506.0,426.6 508.0,426.3 510.0,426.9 512.0,426.1 514.0,428.0 516.0,429.6 518.0,427.8 520.0,428.9 522.0,427.8 524.0,428.5 526.0,428.4 528.0,430.7 530.0,431.2 532.0,432.1 534.0,430.6 536.0,431.7 538.0,432.3 540.0,432.1 542.0,433.4 544.0,433.2 546.0,432.3 548.0,433.4 550.0,433.3 552.0,432.6 554.0,433.8 556.0,432.7 558.0,433.7 560.0,434.5 562.0,433.4 564.0,435.1 566.0,434.1 568.0,435.6 570.0,435.3 572.0,434.4 574.0,437.2 576.0,435.4 578.0,435.2 580.0,436.4 582.0,436.1 584.0,437.0 586.0,437.3 588.0,437.8 590.0,438.0 592.0,437.5 594.0,437.2 596.0,438.7 598.0,438.5 600.0,438.9 602.0,440.3 604.0,438.2 606.0,438.4 608.0,439.5 610.0,438.5 612.0,440.3 614.0,440.1 616.0,439.9 618.0,439.5 620.0,441.9 622.0,440.1 624.0,441.9 626.0,442.3 628.0,443.2 630.0,443.0 632.0,441.9 634.0,442.2 636.0,443.4 638.0,441.3 640.0,443.0 642.0,443.1 644.0,441.8 646.0,443.7 648.0,442.4 650.0,441.1 652.0,441.5 654.0,442.5 656.0,441.4 658.0,442.7 660.0,442.8 662.0,442.6 664.0,443.8 666.0,443.9 668.0,445.0 670.0,445.1 672.0,445.2 674.0,445.5 676.0,445.4 678.0,444.3 680.0,442.8 682.0,443.7 684.0,444.7 686.0,446.3 688.0,446.2 690.0,446.1 692.0,444.9 694.0,446.3 696.0,445.2 698.0,445.4 700.0,445.3 702.0,447.9 704.0,449.9 706.0,449.9 708.0,448.9 710.0,450.9 712.0,450.3 714.0,452.1 716.0,453.1 718.0,454.6 720.0,453.2 722.0,453.4 724.0,454.1 726.0,454.1 728.0,457.1 730.0,457.6 732.0,456.6 734.0,457.8 736.0,457.5 738.0,460.4 740.0,460.1 742.0,459.5 744.0,462.2 746.0,462.5 748.0,464.1 750.0,465.7 752.0,464.7 754.0,466.4 756.0,468.8 758.0,468.1 760.0,468.5 762.0,470.5 764.0,470.0 766.0,472.7 768.0,474.3 770.0,475.9 772.0,476.7 774.0,476.8 776.0,477.2 778.0,478.1 780.0,479.4 782.0,481.5 784.0,480.3 786.0,481.6 788.0,482.5 790.0,482.9 792.0,483.1 794.0,485.5 796.0,486.1 798.0,487.1 800.0,486.6 802.0,487.6 804.0,487.4 806.0,487.7 808.0,488.3 810.0,490.4 812.0,492.2 814.0,492.5 815.0,492.2 816.5,492.2 816.5,520.0 817.5,297.5 819.0,294.5 821.0,293.2 824.0,292.5 999.5,292.5 999.5,120.0" stroke="#dd0000" stroke-width="1.0" stroke-dasharray="2,1"/>
<polyline points="309.0,272.5 445.5,272.5 445.5,520.0 447.5,520.0 447.5,446.8 448.0,440.8 450.0,437.3 452.0,434.6 454.0,430.8 456.0,430.6 458.0,428.8 460.0,428.9 462.0,427.6 464.0,427.3 466.0,426.8 468.0,426.5 470.0,427.2 472.0,427.0 474.0,428.3 476.0,427.8 478.0,426.8 480.0,427.5 482.0,427.5 484.0,426.6 486.0,427.4 488.0,426.3 490.0,427.0 492.0,427.7 494.0,428.4 496.0,429.5 498.0,429.2 500.0,427.7 502.0,428.6 504.0,428.5 506.0,429.9 508.0,431.0 510.0,429.5 512.0,430.9 514.0,430.3 516.0,430.0 518.0,430.8 520.0,431.2 522.0,431.1 524.0,431.2 526.0,431.9 528.0,433.0 530.0,432.2 532.0,432.6 534.0,432.6 536.0,434.1 538.0,433.5 540.0,434.8 542.0,433.6 544.0,435.5 546.0,435.2 548.0,436.6 550.0,436.9 552.0,437.4 554.0,435.6 556.0,437.0 558.0,437.1 560.0,438.3 562.0,438.0 564.0,437.6 566.0,439.0 568.0,439.8 570.0,438.3 572.0,437.6 574.0,438.3 576.0,439.3 578.0,438.4 580.0,439.4 582.0,439.7 584.0,440.6 586.0,439.4 588.0,439.1 590.0,440.1 592.0,441.2 594.0,441.3 596.0,441.8 598.0,440.9 600.0,440.1 602.0,441.7 604.0,442.3 606.0,441.0 608.0,440.8 610.0,442.5 612.0,443.1 614.0,442.3 616.0,442.2 618.0,442.8 620.0,442.1 622.0,442.7 624.0,442.9 626.0,442.5 628.0,443.8 630.0,445.5 632.0,443.8 634.0,444.9 636.0,445.1 638.0,444.4 640.0,445.1 642.0,445.8 644.0,444.7 646.0,444.8 648.0,445.4 650.0,445.2 652.0,444.5 654.0,444.9 656.0,445.9 658.0,445.9 660.0,445.3 662.0,445.1 664.0,444.7 666.0,446.0 668.0,446.7 670.0,445.7 672.0,446.3 674.0,445.2 676.0,445.1 678.0,446.2 680.0,446.1 682.0,446.5 684.0,445.9 686.0,447.0 688.0,447.6 690.0,447.4 692.0,448.6 694.0,448.1 696.0,448.5 698.0,448.3 700.0,450.4 702.0,450.8 704.0,452.3 706.0,451.8 708.0,453.1 710.0,453.8 712.0,452.8 714.0,455.1 716.0,455.3 718.0,455.3 720.0,455.8 722.0,456.2 724.0,458.0 726.0,458.2 728.0,458.7 730.0,459.3 732.0,460.6 734.0,461.2 736.0,460.9 738.0,462.1 740.0,464.0 742.0,463.7 744.0,465.5 746.0,466.7 748.0,466.7 750.0,468.7 752.0,468.1 754.0,468.4 756.0,469.6 758.0,469.9 760.0,470.4 762.0,472.0 764.0,473.5 766.0,474.9 768.0,476.8 770.0,477.3 772.0,478.0 774.0,477.4 776.0,477.9 778.0,480.0 780.0,480.7 782.0,483.5 784.0,484.6 786.0,483.9 788.0,484.0 790.0,486.7 792.0,488.3 794.0,488.8 796.0,487.6 798.0,489.8 800.0,490.5 802.0,491.7 804.0,491.9 806.0,492.5 808.0,493.7 810.0,493.4 812.0,493.1 814.0,493.4 815.0,494.8 816.5,494.8 816.5,520.0 817.5,277.5 819.0,274.5 821.0,273.2 824.0,272.5 999.5,272.5 999.5,120.0" stroke="#006600" stroke-width="1.0"/>
<polyline points="309.0,295.5 445.5,295.5 445.5,520.0 447.5,520.0 447.5,450.3 448.0,444.3 450.0,441.3 452.0,437.4 454.0,435.3 456.0,434.5 458.0,433.5 460.0,432.3 462.0,431.9 464.0,431.0 466.0,432.0 468.0,430.9 470.0,431.6 472.0,430.2 474.0,429.6 476.0,430.4 478.0,430.8 480.0,431.8 482.0,432.4 484.0,431.9 486.0,431.2 488.0,432.1 490.0,431.8 492.0,431.3 494.0,431.3 496.0,430.7 498.0,432.4 500.0,431.7 502.0,431.9 504.0,433.2 506.0,433.9 508.0,434.3 510.0,434.7 512.0,435.4 514.0,436.2 516.0,436.7 518.0,435.7 520.0,435.4 522.0,435.0 524.0,435.8 526.0,435.6 528.0,437.6 530.0,438.0 532.0,437.1 534.0,438.1 536.0,438.7 538.0,437.6 540.0,439.1 542.0,439.7 544.0,439.4 546.0,440.7 548.0,439.2 550.0,438.8 552.0,440.5 554.0,441.1 556.0,440.0 558.0,441.2 560.0,441.8 562.0,441.7 564.0,441.2 566.0,442.9 568.0,443.8 570.0,443.4 572.0,442.6 574.0,443.2 576.0,443.8 578.0,443.9 580.0,444.7 582.0,443.8 584.0,445.2 586.0,445.4 588.0,444.2 590.0,443.8 592.0,445.5 594.0,445.1 596.0,446.5 598.0,447.2 600.0,446.0 602.0,446.8 604.0,446.0 606.0,446.5 608.0,446.1 610.0,447.6 612.0,446.6 614.0,448.3 616.0,447.7 618.0,447.4 620.0,446.9 622.0,447.3 624.0,447.2 626.0,447.7 628.0,449.8 630.0,449.9 632.0,448.6 634.0,448.2 636.0,449.0 638.0,450.3 640.0,449.8 642.0,449.4 644.0,450.1 646.0,449.1 648.0,449.0 650.0,449.8 652.0,450.9 654.0,450.4 656.0,449.9 658.0,450.3 660.0,451.2 662.0,450.1 664.0,449.6 666.0,450.4 668.0,450.3 670.0,449.9 672.0,449.9 674.0,451.6 676.0,450.6 678.0,450.6 680.0,452.2 682.0,451.6 684.0,453.0 686.0,453.5 688.0,453.0 690.0,453.0 692.0,452.2 694.0,453.0 696.0,453.9 698.0,455.5 700.0,454.1 702.0,455.9 704.0,457.3 706.0,458.1 708.0,457.9 710.0,458.7 712.0,458.6 714.0,458.2 716.0,459.4 718.0,461.1 720.0,460.5 722.0,461.7 724.0,461.5 726.0,462.0 728.0,464.4 730.0,463.7 732.0,465.3 734.0,465.4 736.0,465.9 738.0,468.1 740.0,468.1 742.0,469.1 744.0,470.9 746.0,471.6 748.0,471.1 750.0,472.1 752.0,474.2 754.0,474.4 756.0,474.5 758.0,475.7 760.0,476.7 762.0,478.1 764.0,478.5 766.0,480.9 768.0,482.8 770.0,482.2 772.0,483.4 774.0,483.7 776.0,485.5 778.0,485.9 780.0,486.0 782.0,486.7 784.0,487.6 786.0,489.2 788.0,491.5 790.0,492.3 792.0,492.7 794.0,492.8 796.0,495.0 798.0,496.3 800.0,495.4 802.0,496.0 804.0,496.9 806.0,497.4 808.0,497.4 810.0,499.5 812.0,500.3 814.0,499.6 815.0,501.1 816.5,501.1 816.5,520.0 817.5,300.5 819.0,297.5 821.0,296.2 824.0,295.5 999.5,295.5 999.5,120.0" stroke="#0000ff" stroke-width="1.0"/>
<polyline points="448.5,520.0 449.0,218.5 450.0,210.0 453.0,205.0 457.0,204.0 460.0,204.0 463.0,201.0 467.0,200.0 470.0,202.0 474.0,201.0 478.6,200.5 483.3,201.0 484.5,215.0 489.3,331.0 490.0,331.0 493.5,215.0 494.5,207.0 497.0,204.0 501.0,204.0 505.0,203.0 510.0,203.6 515.0,205.0 520.0,205.6 525.0,206.1 530.0,206.0 535.0,206.8 540.0,206.8 545.0,207.5 550.0,207.8 555.0,208.5 559.8,209.3 564.6,209.5 565.5,225.0 570.0,327.5 570.5,327.0 573.0,216.7 575.0,211.0 578.0,210.0 582.0,210.9 586.0,210.9 590.0,211.0 595.0,211.8 600.0,212.5 605.0,213.0 610.0,213.6 615.0,214.3 620.0,216.0 624.0,214.5 630.5,215.5 631.0,225.0 633.3,250.6 634.0,239.0 635.0,220.0 636.5,215.0 641.0,216.5 645.5,217.3 650.0,217.5 655.0,217.2 660.0,217.0 664.3,217.2 668.6,217.4 672.9,217.6 677.1,217.0 681.4,217.4 685.7,218.1 690.0,218.0 695.0,218.4 700.0,219.1 705.0,219.0 710.0,220.1 715.0,222.0 720.0,224.0 725.0,225.3 730.0,227.0 735.0,228.0 740.0,229.6 745.0,232.0 750.0,234.3 755.0,235.9 760.0,238.0 764.0,238.4 768.0,239.6 772.0,239.3 776.0,240.9 780.0,241.0 784.0,241.4 788.0,242.0 792.0,242.4 796.0,243.4 800.0,244.0 805.0,245.1 810.0,245.0 815.0,246.0 816.5,246.0 816.5,120.0 817.5,327.0 819.0,331.0 821.0,332.0 824.0,332.5" stroke="#000"/>
<polyline points="309,332.5 445,332.5" stroke="#000" stroke-dasharray="3,2"/>
<polyline points="826,332.5 999.5,332.5 1000.5,120" stroke="#000" stroke-dasharray="3,2"/>
<polyline points="309.0,350.5 444.5,350.5 445.5,520.0 447.5,520.0 449.0,361.1 450.0,352.6 453.0,347.6 457.0,346.6 460.0,346.6 463.0,343.6 467.0,342.6 470.0,344.6 474.0,343.6 478.6,343.7 483.3,343.6 484.5,357.6 489.3,470.0 490.0,470.0 493.5,357.6 494.5,349.6 497.0,346.6 501.0,346.0 505.0,345.6 510.0,346.4 515.0,347.6 520.0,347.5 525.0,348.5 530.0,348.6 535.0,349.0 540.0,349.6 545.0,350.1 550.0,350.7 555.0,351.1 559.8,351.1 564.6,352.1 565.5,367.6 570.0,470.0 570.5,470.0 573.0,359.3 575.0,353.6 578.0,352.6 582.0,353.3 586.0,353.7 590.0,353.6 595.0,354.1 600.0,355.1 605.0,356.1 610.0,356.5 615.0,356.9 620.0,358.6 624.0,357.1 630.5,358.1 631.0,367.6 633.3,390.0 634.0,381.6 635.0,362.6 636.5,357.6 641.0,359.1 645.5,359.4 650.0,360.1 655.0,359.6 660.0,359.6 664.3,359.2 668.6,359.8 672.9,360.0 677.1,360.2 681.4,360.3 685.7,360.5 690.0,360.6 695.0,360.5 700.0,360.9 705.0,361.6 710.0,363.3 715.0,364.9 720.0,366.6 725.0,367.5 730.0,369.0 735.0,370.6 740.0,373.2 745.0,374.6 750.0,377.0 755.0,378.9 760.0,380.6 764.0,381.0 768.0,381.7 772.0,382.6 776.0,383.1 780.0,383.6 784.0,384.4 788.0,384.2 792.0,385.7 796.0,385.6 800.0,386.6 805.0,387.1 810.0,390.0 815.0,390.0 816.0,520.0 817.5,360.0 819.0,353.0 822.0,350.6 826.0,350.5 999.5,350.5 1000.5,120.0" stroke="#777777"/>
<line x1="444.5" y1="120" x2="444.5" y2="256" stroke="#ffff00"/>
<line x1="447.5" y1="120" x2="447.5" y2="232" stroke="#ff0000"/>
<line x1="447.5" y1="232" x2="447.5" y2="252" stroke="#000000"/>
<line x1="446.5" y1="256" x2="446.5" y2="310" stroke="#ffff00"/>
<line x1="447.5" y1="256" x2="447.5" y2="310" stroke="#ffff00"/>
<line x1="445.5" y1="120" x2="445.5" y2="300" stroke="#00ee00"/>
<line x1="445.5" y1="300" x2="445.5" y2="520" stroke="#006600"/>
<line x1="815.5" y1="120" x2="815.5" y2="222" stroke="#ff0000"/>
<line x1="817.5" y1="120" x2="817.5" y2="300" stroke="#ffff00"/>
<line x1="818.5" y1="120" x2="818.5" y2="195" stroke="#00ffff"/>
<line x1="816.5" y1="120" x2="816.5" y2="300" stroke="#00ee00"/>
<line x1="816.5" y1="300" x2="816.5" y2="520" stroke="#006600"/>
<line x1="999.5" y1="120" x2="999.5" y2="351" stroke="#888888"/>
<line x1="999.5" y1="120" x2="999.5" y2="242" stroke="#00ffff"/>
<line x1="1000.5" y1="120" x2="1000.5" y2="300" stroke="#00ee00"/>
<line x1="1001.5" y1="120" x2="1001.5" y2="250" stroke="#006600"/>
<line x1="1001.5" y1="250" x2="1001.5" y2="290" stroke="#ffff00"/>
<polyline points="1001.5,250 1001.5,205 1004,245 1005,252 1007,253" stroke="#ffff00"/>
<polyline points="1002,186 1004,177 1006,174.5 1008,174 1011,173.5" stroke="#ff0000"/>
<polyline points="1002,189 1004,182 1007,178.5 1011,177.5" stroke="#006600"/>
<polyline points="1002,191 1005,185 1008,181.5 1011,180.5" stroke="#00ffff"/>
<path d="M1003,193 Q1003,184 1007.5,184 Q1011,184 1011,188" stroke="#880000" fill="none"/>
<polyline points="1003,191 1005,194 1008,193 1011,193" stroke="#888888"/>
<polyline points="1002,178 1003,172 1005,170.5" stroke="#ff00ff"/>
</g>
<g stroke-width="1" shape-rendering="crispEdges"><line x1="311" y1="211.5" x2="315" y2="211.5" stroke="#000"/><line x1="1007" y1="211.5" x2="1011" y2="211.5" stroke="#000"/><line x1="311" y1="251.5" x2="315" y2="251.5" stroke="#000"/><line x1="1007" y1="251.5" x2="1011" y2="251.5" stroke="#000"/><line x1="311" y1="292.5" x2="315" y2="292.5" stroke="#000"/><line x1="1007" y1="292.5" x2="1011" y2="292.5" stroke="#000"/><line x1="311" y1="332.5" x2="315" y2="332.5" stroke="#000"/><line x1="1007" y1="332.5" x2="1011" y2="332.5" stroke="#000"/><line x1="311" y1="373.5" x2="315" y2="373.5" stroke="#000"/><line x1="1007" y1="373.5" x2="1011" y2="373.5" stroke="#000"/><line x1="311" y1="413.5" x2="315" y2="413.5" stroke="#000"/><line x1="1007" y1="413.5" x2="1011" y2="413.5" stroke="#000"/><line x1="427.5" y1="170" x2="427.5" y2="174" stroke="#000"/><line x1="427.5" y1="449" x2="427.5" y2="453" stroke="#000"/><line x1="544.5" y1="170" x2="544.5" y2="174" stroke="#000"/><line x1="544.5" y1="449" x2="544.5" y2="453" stroke="#000"/><line x1="661.5" y1="170" x2="661.5" y2="174" stroke="#000"/><line x1="661.5" y1="449" x2="661.5" y2="453" stroke="#000"/><line x1="777.5" y1="170" x2="777.5" y2="174" stroke="#000"/><line x1="777.5" y1="449" x2="777.5" y2="453" stroke="#000"/><line x1="894.5" y1="170" x2="894.5" y2="174" stroke="#000"/><line x1="894.5" y1="449" x2="894.5" y2="453" stroke="#000"/></g>
<rect x="311.5" y="170.5" width="700" height="283" fill="none" stroke="#000" stroke-width="1" shape-rendering="crispEdges"/>
<g font-family="Liberation Mono" font-size="13.7px" fill="#000" stroke="#000" stroke-width="0.3"><text x="305.8" y="173.8" text-anchor="end">−750</text><text x="305.8" y="214.2" text-anchor="end">−1000</text><text x="305.8" y="254.7" text-anchor="end">−1250</text><text x="305.8" y="295.1" text-anchor="end">−1500</text><text x="305.8" y="335.5" text-anchor="end">−1750</text><text x="305.8" y="375.9" text-anchor="end">−2000</text><text x="305.8" y="416.4" text-anchor="end">−2250</text><text x="305.8" y="456.8" text-anchor="end">−2500</text><text x="310.5" y="468.6" text-anchor="middle">2.363e+05</text><text x="427.2" y="468.6" text-anchor="middle">2.364e+05</text><text x="543.8" y="468.6" text-anchor="middle">2.364e+05</text><text x="660.5" y="468.6" text-anchor="middle">2.364e+05</text><text x="777.2" y="468.6" text-anchor="middle">2.365e+05</text><text x="893.8" y="468.6" text-anchor="middle">2.366e+05</text><text x="1010.5" y="468.6" text-anchor="middle">2.366e+05</text>
<text x="321" y="184.7">RF_didq (Hz)</text>
<text x="1002" y="449" text-anchor="end">sample (sample)</text>
</g>
</svg><!--/CHART-->
<svg class="a" style="left:1070px;top:552px" width="18" height="16"><g stroke="#77735f" stroke-width="1.2"><line x1="6" y1="14.5" x2="16" y2="5"/><line x1="10.3" y1="14.5" x2="16" y2="9.4"/><line x1="14.5" y1="14.5" x2="16" y2="13.2"/></g></svg>
<!-- left panel -->
<div class="a" style="left:42px;top:49px;width:170px;height:517px;border:1px solid #9a9aa0"></div>
<div class="a lbl" style="left:97px;top:52px">Detection</div>
<div class="a sep" style="left:46px;top:72px;width:162px"></div>
<div class="a lbl" style="left:53px;top:84px">Voie</div>
<div class="a pop" style="left:86px;top:82px;width:105px;height:21px"><div class="t" style="">v2</div><div class="b" style="width:20px"><div class="arr up" style="top:3px"></div><div class="arr dn" style="top:11px"></div></div></div>
<div class="a lbl" style="left:59px;top:106px">X</div>
<div class="a pop" style="left:86px;top:104px;width:119px;height:21px"><div class="t" style="">sample (sampl</div><div class="b" style="width:20px"><div class="arr up" style="top:3px"></div><div class="arr dn" style="top:11px"></div></div></div>
<div class="a lbl" style="left:59px;top:128px">Y</div>
<div class="a pop" style="left:86px;top:126px;width:119px;height:21px"><div class="t" style="">RF_didq (Hz)</div><div class="b" style="width:20px"><div class="arr up" style="top:3px"></div><div class="arr dn" style="top:11px"></div></div></div>
<div class="a lbl" style="left:47px;top:150px">Mode</div>
<div class="a pop" style="left:86px;top:148px;width:105px;height:21px"><div class="t" style="">Totale</div><div class="b" style="width:20px"><div class="arr up" style="top:3px"></div><div class="arr dn" style="top:11px"></div></div></div>
<div class="a lbl" style="left:58px;top:181px">moyenne</div>
<div class="a tf" style="left:130px;top:177px;width:42px;height:23px"><div class="t">1</div></div>
<div class="a stp" style="left:175px;top:177px;width:13px;height:22px"><div class="arr up" style="top:3px"></div><div class="arr dn" style="bottom:3px"></div></div>
<div class="a lbl" style="left:45px;top:208px">decorrelation</div>
<div class="a tf" style="left:130px;top:204px;width:42px;height:23px"><div class="t">0</div></div>
<div class="a stp" style="left:175px;top:204px;width:13px;height:22px"><div class="arr up" style="top:3px"></div><div class="arr dn" style="bottom:3px"></div></div>
<div class="a lbl" style="left:61px;top:235px">deglitch</div>
<div class="a tf" style="left:130px;top:231px;width:42px;height:23px"><div class="t">0</div></div>
<div class="a stp" style="left:175px;top:231px;width:13px;height:22px"><div class="arr up" style="top:3px"></div><div class="arr dn" style="bottom:3px"></div></div>
<div class="a tf" style="left:49px;top:258px;width:61px;height:23px;overflow:hidden"><div class="t" style="left:26px;right:auto">–1,00</div></div>
<div class="a stp" style="left:113px;top:258px;width:13px;height:22px"><div class="arr up" style="top:3px"></div><div class="arr dn" style="bottom:3px"></div></div>
<div class="a tf" style="left:130px;top:258px;width:61px;height:23px"><div class="t">30 Hz</div></div>
<div class="a stp" style="left:194px;top:258px;width:13px;height:22px"><div class="arr up" style="top:3px"></div><div class="arr dn" style="bottom:3px"></div></div>
<div class="a lbl" style="left:97px;top:298px">Temporel</div>
<div class="a sep" style="left:46px;top:317px;width:162px"></div>
<div class="a lbl" style="left:108px;top:325px">Axe X</div>
<div class="a pop" style="left:54px;top:343px;width:145px;height:21px"><div class="t" style=""><i style="display:inline-block;width:6px;height:1.4px;background:#111;vertical-align:4px;margin-right:1px"></i><i style="display:inline-block;width:6px;height:1.4px;background:#111;vertical-align:4px;margin-right:1px"></i></div><div class="b" style="width:20px"><div class="arr up" style="top:3px"></div><div class="arr dn" style="top:11px"></div></div></div>
<div class="a tf" style="left:56px;top:367px;width:39px;height:20px;border:none"><div class="t" style="top:2px;right:5px;letter-spacing:0.6px">x 1</div></div>
<div class="a stp" style="left:100px;top:365px;width:13px;height:22px"><div class="arr up" style="top:3px"></div><div class="arr dn" style="bottom:3px"></div></div>
<div class="a lbl" style="left:131px;top:369px">Max : NA</div>
<div class="a lbl" style="left:49px;top:399px">Decale</div>
<div class="a tf" style="left:104px;top:395px;width:82px;height:23px"><div class="t">0,0</div></div>
<div class="a stp" style="left:189px;top:395px;width:13px;height:22px"><div class="arr up" style="top:3px"></div><div class="arr dn" style="bottom:3px"></div></div>
<div class="a pop" style="left:46px;top:425px;width:162px;height:21px"><div class="t" style="left:16px;letter-spacing:0.3px"><i style="display:inline-block;width:6px;height:1.4px;background:#111;vertical-align:4px;margin-right:1px"></i><i style="display:inline-block;width:6px;height:1.4px;background:#111;vertical-align:4px;margin-right:1px"></i> OPTIONS <i style="display:inline-block;width:6px;height:1.4px;background:#111;vertical-align:4px;margin-right:1px"></i><i style="display:inline-block;width:6px;height:1.4px;background:#111;vertical-align:4px;margin-right:1px"></i></div><div class="b" style="width:20px"><div class="arr up" style="top:3px"></div><div class="arr dn" style="top:11px"></div></div></div>

<div class="a" style="left:214px;top:49px;width:22px;height:517px;background:#9b9b9b"></div>
<div class="a" style="left:215px;top:50px;width:20px;height:58px;background:linear-gradient(90deg,#e9e9e9,#f3f3f3 50%,#e9e9e9);overflow:hidden"><div class="vl" style="top:-3px">S</div><div class="vl" style="top:13px">A</div><div class="vl" style="top:29px">U</div><div class="vl" style="top:45px">V</div><div class="a" style="left:0;top:0;width:20px;height:2px;background:linear-gradient(#fafafa,#ececec)"></div></div>
<div class="a" style="left:215px;top:109px;width:20px;height:78px;background:linear-gradient(90deg,#e9e9e9,#f3f3f3 50%,#e9e9e9);overflow:hidden"><div class="vl" style="top:7px">E</div><div class="vl" style="top:23px">F</div><div class="vl" style="top:39px">F</div><div class="vl" style="top:55px">A</div></div>
<div class="a" style="left:215px;top:188px;width:20px;height:119px;background:linear-gradient(90deg,#e9e9e9,#f3f3f3 50%,#e9e9e9);overflow:hidden"><div class="vl" style="top:4px">L</div><div class="vl" style="top:20px">E</div><div class="vl" style="top:36px">G</div><div class="vl" style="top:52px">E</div><div class="vl" style="top:68px">N</div><div class="vl" style="top:84px">D</div><div class="vl" style="top:100px">E</div></div>
<div class="a" style="left:215px;top:308px;width:20px;height:156px;background:linear-gradient(#7e7e7e 0px,#a2a2a2 3px,#9c9c9c 40%,#b0b0b0 97%,#c8c8c8 100%);overflow:hidden"><div class="vl" style="top:6px">D</div><div class="vl" style="top:22px">E</div><div class="vl" style="top:38px">T</div><div class="vl" style="top:54px">E</div><div class="vl" style="top:70px">C</div><div class="vl" style="top:86px">T</div><div class="vl" style="top:102px">I</div><div class="vl" style="top:118px">O</div><div class="vl" style="top:134px">N</div></div>
<div class="a" style="left:215px;top:465px;width:20px;height:79px;background:linear-gradient(90deg,#e9e9e9,#f3f3f3 50%,#e9e9e9);overflow:hidden"><div class="vl" style="top:9px">F</div><div class="vl" style="top:25px">I</div><div class="vl" style="top:41px">T</div><div class="vl" style="top:57px">S</div></div>
<div class="a" style="left:215px;top:545px;width:20px;height:20px;background:linear-gradient(90deg,#e9e9e9,#f3f3f3 50%,#e9e9e9);overflow:hidden"><svg class="a" style="left:0;top:0" width="20" height="20"><path d="M10,2 L17.5,9 L10,16 L2.5,9 Z" fill="#000"/><circle cx="2.3" cy="9" r="1" fill="#000"/><circle cx="17.7" cy="9" r="1" fill="#000"/><path d="M7.9,7.3 Q8,5 10.1,5 Q12.3,5 12.3,7 Q12.3,8.4 10.6,9.3 Q10,9.7 10,11" fill="none" stroke="#fff" stroke-width="1.3"/><rect x="9.3" y="11.8" width="1.4" height="1.5" fill="#fff"/></svg></div>
</div>
</body></html>
